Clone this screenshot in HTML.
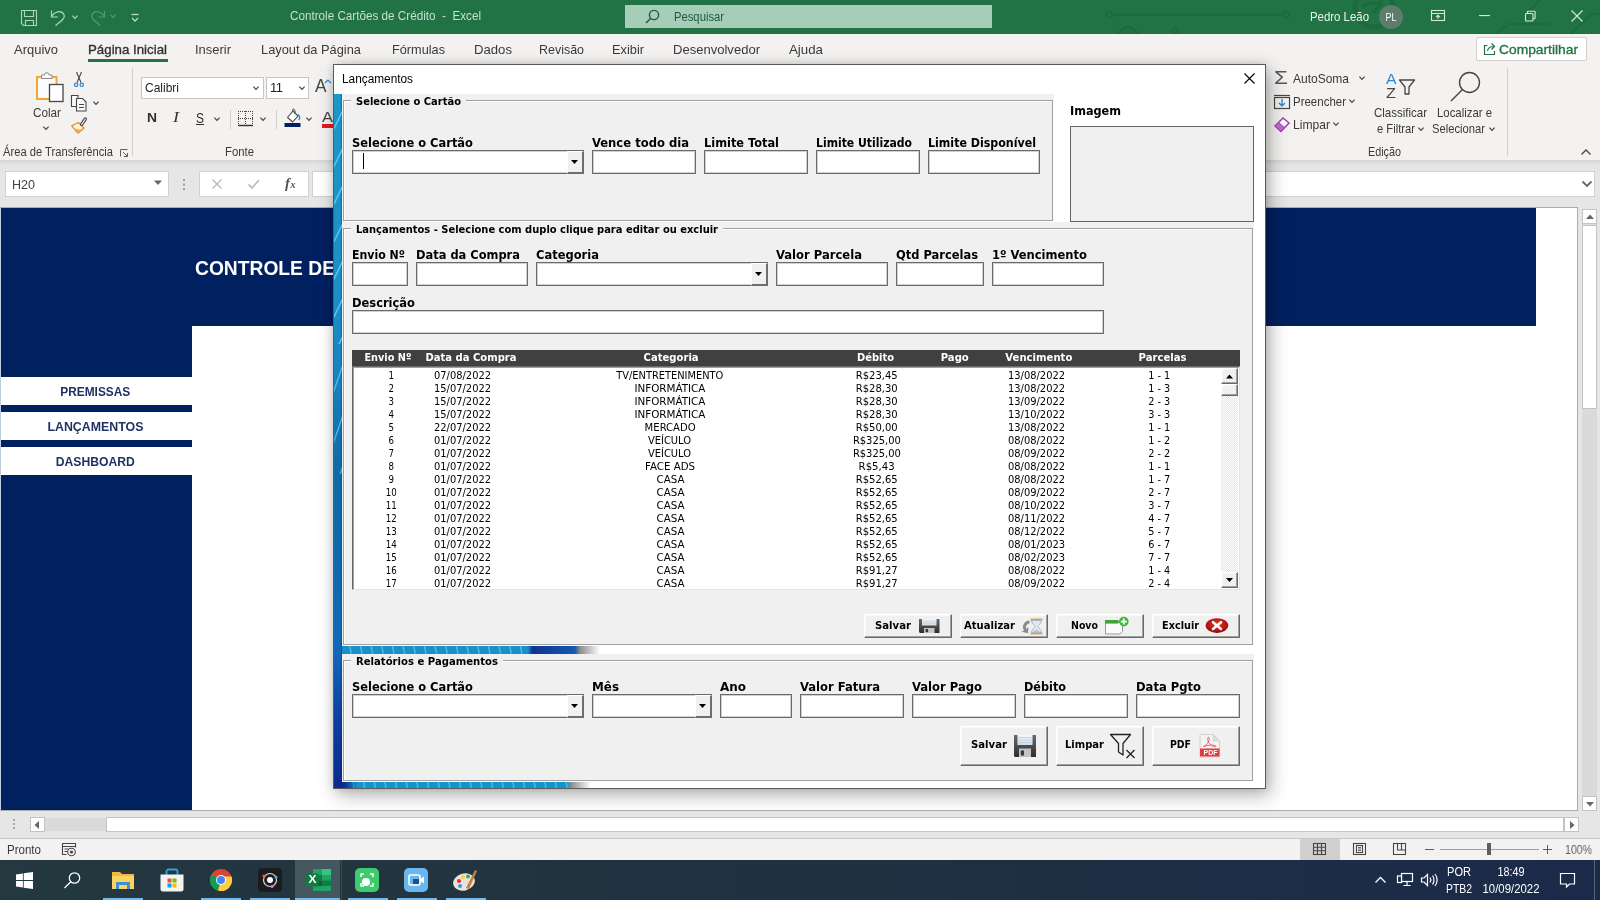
<!DOCTYPE html>
<html lang="pt-BR"><head><meta charset="utf-8"><title>Controle Cartões de Crédito - Excel</title>
<style>
html,body{margin:0;padding:0;}
body{width:1600px;height:900px;overflow:hidden;position:relative;background:#fff;font-family:"Liberation Sans",sans-serif;}
#root{position:absolute;left:0;top:0;width:1600px;height:900px;overflow:hidden;will-change:transform;}
#root div,#root svg,#root span.t{position:absolute;box-sizing:border-box;}
span.t,span.ti{white-space:nowrap;display:inline-block;vertical-align:top;}
#root div.tc{text-align:center;font-size:0;}
#root div.tr{text-align:right;font-size:0;}
#root .tb{background:#fff;border:1px solid #6a6a6a;box-shadow:inset 0 0 0 1px rgba(90,90,90,.28);}
#root .btn{background:#f0f0f0;border:1px solid;border-color:#fff #696969 #696969 #fff;box-shadow:inset -1px -1px 0 #a0a0a0, inset 1px 1px 0 #f7f7f7;}
#root .cb{background:#f0f0f0;border-style:solid;border-width:1px 2px 2px 1px;border-color:#fff #6e6e6e #6e6e6e #fff;}
</style></head><body><div id="root">
<div style="left:0px;top:0px;width:1600px;height:34px;background:#217346;"></div>
<svg style="left:1100px;top:0px;" width="500" height="34" viewBox="0 0 500 34"><g fill="none" stroke="#1c6a3e" stroke-width="1.800"><path d="M12 14.500H183"></path><circle cx="9" cy="14.500" r="3"></circle><circle cx="186" cy="14.500" r="3"></circle><circle cx="28" cy="36" r="9" stroke-width="3"></circle><circle cx="75" cy="31" r="2.500"></circle><circle cx="274" cy="8" r="19" stroke-width="5"></circle><path d="M262 6l8-3l12 0M282 3l-9 10" stroke-width="3"></path><path d="M395 34l14-10h40M470 34l22-20h40l14-14M440 0l-12 12"></path></g></svg>
<svg style="left:20px;top:9px;" width="18" height="18" viewBox="0 0 18 18"><g fill="none" stroke="#a9d8ba" stroke-width="1.1"><path d="M1.5 1.5h15v15h-13l-2-2z"></path><path d="M4.5 1.5v6h9v-6M5.5 16.5v-5h8v5"></path></g></svg>
<svg style="left:49px;top:8px;" width="18" height="18" viewBox="0 0 18 18"><g fill="none" stroke="#a9d8ba" stroke-width="1.2"><path d="M2.5 2.5v6.5h6.5"></path><path d="M2.5 9c3-6 10-7 12.5-2.5c1.5 3.5-2 6-8.5 11"></path></g></svg>
<svg style="left:70px;top:12.5px;" width="10" height="8" viewBox="0 0 10 8"><path d="M2.4 2.7L5 5.3L7.6 2.7" fill="none" stroke="#a9d8ba" stroke-width="1.2"></path></svg>
<svg style="left:89px;top:8px;" width="18" height="18" viewBox="0 0 18 18"><g fill="none" stroke="#4f9a72" stroke-width="1.200"><path d="M15.5 3v6h-6"></path><path d="M15.5 9c-3-6-10-7-12.500-2.500c-1.500 3.500 2 6 8.500 11"></path></g></svg>
<svg style="left:108px;top:12px;" width="10" height="8" viewBox="0 0 10 8"><path d="M2.4 2.7L5 5.3L7.6 2.7" fill="none" stroke="#4f9470" stroke-width="1.3"></path></svg>
<svg style="left:130px;top:12px;" width="10" height="12" viewBox="0 0 10 12"><g fill="none" stroke="#b9dcc6" stroke-width="1.3"><path d="M1.5 2.500h7"></path><path d="M2 6l3 3l3-3"></path></g></svg>
<span class="t" style="left: 290px; top: 6px; font: 400 13px / 20px &quot;Liberation Sans&quot;, sans-serif; color: rgb(200, 223, 210); white-space: nowrap; transform: scaleX(0.8991); transform-origin: 0px 50%;">Controle Cartões de Crédito&nbsp; -&nbsp; Excel</span>
<div style="left:625px;top:5px;width:367px;height:23px;background:#a6cdb8;"></div>
<svg style="left:645px;top:9px;" width="15" height="15" viewBox="0 0 15 15"><g fill="none" stroke="#1e5c3a" stroke-width="1.4"><circle cx="9" cy="6" r="4.600"></circle><path d="M5.700 9.300L1 14"></path></g></svg>
<span class="t" style="left: 674px; top: 6px; font: 400 13px / 21px &quot;Liberation Sans&quot;, sans-serif; color: rgb(30, 92, 58); white-space: nowrap; transform: scaleX(0.8649); transform-origin: 0px 50%;">Pesquisar</span>
<span class="t" style="left: 1310px; top: 7px; font: 400 13px / 20px &quot;Liberation Sans&quot;, sans-serif; color: rgb(232, 242, 236); white-space: nowrap; transform: scaleX(0.8775); transform-origin: 0px 50%;">Pedro Leão</span>
<div style="left:1379px;top:5px;width:24px;height:24px;border-radius:12px;background:#5d7c6c;"></div>
<div class="tc" style="left:1091px;top:6px;width:600px;height:24px;"><span class="ti" style="font: 400 10px / 24px &quot;Liberation Sans&quot;, sans-serif; color: rgb(255, 255, 255); white-space: nowrap; transform: scaleX(0.8991); transform-origin: 50% 50%;">PL</span></div>
<svg style="left:1430px;top:9px;" width="16" height="14" viewBox="0 0 16 14"><g fill="none" stroke="#d6e8dd" stroke-width="1.1"><rect x="1.5" y="1.500" width="13" height="10"></rect><path d="M1.500 4.500h13M8 10V6.500M6 8.200l2-2l2 2"></path></g></svg>
<svg style="left:1479px;top:15px;" width="12" height="2" viewBox="0 0 12 2"><rect width="11" height="1.100" fill="#d6e8dd"></rect></svg>
<svg style="left:1524px;top:10px;" width="12" height="12" viewBox="0 0 12 12"><g fill="none" stroke="#d6e8dd" stroke-width="1.1"><rect x="1.500" y="3.500" width="7.500" height="7.500" rx="1"></rect><path d="M3.500 3.500v-1.500a.8 .8 0 0 1 .8-.8h6a.8 .8 0 0 1 .8 .8v6a.8 .8 0 0 1-.8 .8h-1.500"></path></g></svg>
<svg style="left:1570px;top:9px;" width="14" height="14" viewBox="0 0 14 14"><path d="M1.500 1.500l11 11M12.500 1.500l-11 11" stroke="#d6e8dd" stroke-width="1.200" fill="none"></path></svg>
<div style="left:0px;top:34px;width:1600px;height:126px;background:#f3f2f1;"></div>
<span class="t" style="left: 14px; top: 39px; font: 400 13.5px / 22px &quot;Liberation Sans&quot;, sans-serif; color: rgb(59, 58, 57); white-space: nowrap; transform: scaleX(0.9611); transform-origin: 0px 50%;">Arquivo</span>
<span class="t" style="left: 88px; top: 39px; font: 400 13.5px / 22px &quot;Liberation Sans&quot;, sans-serif; color: rgb(50, 49, 48); -webkit-text-stroke: 0.35px rgb(50, 49, 48); white-space: nowrap; transform: scaleX(0.9837); transform-origin: 0px 50%;">Página Inicial</span>
<span class="t" style="left: 195px; top: 39px; font: 400 13.5px / 22px &quot;Liberation Sans&quot;, sans-serif; color: rgb(59, 58, 57); white-space: nowrap; transform: scaleX(0.9596); transform-origin: 0px 50%;">Inserir</span>
<span class="t" style="left: 261px; top: 39px; font: 400 13.5px / 22px &quot;Liberation Sans&quot;, sans-serif; color: rgb(59, 58, 57); white-space: nowrap; transform: scaleX(0.9515); transform-origin: 0px 50%;">Layout da Página</span>
<span class="t" style="left: 392px; top: 39px; font: 400 13.5px / 22px &quot;Liberation Sans&quot;, sans-serif; color: rgb(59, 58, 57); white-space: nowrap; transform: scaleX(0.942); transform-origin: 0px 50%;">Fórmulas</span>
<span class="t" style="left: 474px; top: 39px; font: 400 13.5px / 22px &quot;Liberation Sans&quot;, sans-serif; color: rgb(59, 58, 57); white-space: nowrap; transform: scaleX(0.9736); transform-origin: 0px 50%;">Dados</span>
<span class="t" style="left: 539px; top: 39px; font: 400 13.5px / 22px &quot;Liberation Sans&quot;, sans-serif; color: rgb(59, 58, 57); white-space: nowrap; transform: scaleX(0.9225); transform-origin: 0px 50%;">Revisão</span>
<span class="t" style="left: 612px; top: 39px; font: 400 13.5px / 22px &quot;Liberation Sans&quot;, sans-serif; color: rgb(59, 58, 57); white-space: nowrap; transform: scaleX(0.9477); transform-origin: 0px 50%;">Exibir</span>
<span class="t" style="left: 673px; top: 39px; font: 400 13.5px / 22px &quot;Liberation Sans&quot;, sans-serif; color: rgb(59, 58, 57); white-space: nowrap; transform: scaleX(0.966); transform-origin: 0px 50%;">Desenvolvedor</span>
<span class="t" style="left: 789px; top: 39px; font: 400 13.5px / 22px &quot;Liberation Sans&quot;, sans-serif; color: rgb(59, 58, 57); white-space: nowrap; transform: scaleX(0.9846); transform-origin: 0px 50%;">Ajuda</span>
<div style="left:88px;top:59px;width:80px;height:3px;background:#217346;"></div>
<div style="left:1476px;top:37px;width:111px;height:24px;background:#fff;border:1px solid #d2d0ce;border-radius:2px;"></div>
<svg style="left:1482px;top:41px;" width="15" height="15" viewBox="0 0 15 15"><g fill="none" stroke="#217346" stroke-width="1.200"><path d="M5.500 4.500h-3v9h10v-3.500"></path><path d="M5.500 10c.5-3 2.500-4.500 6-4.500M9.500 2.500l3 3l-3 3"></path></g></svg>
<span class="t" style="left: 1499px; top: 39px; font: 400 13.5px / 22px &quot;Liberation Sans&quot;, sans-serif; color: rgb(33, 115, 70); -webkit-text-stroke: 0.35px rgb(33, 115, 70); white-space: nowrap; transform: scaleX(1.0222); transform-origin: 0px 50%;">Compartilhar</span>
<svg style="left:34px;top:70px;" width="32" height="34" viewBox="0 0 32 34"><g fill="none"><path d="M3 7h19.500v22h-19.500z" fill="#fbfbfb" stroke="#f0a830" stroke-width="2"></path><path d="M7.500 8.500v-3.500h3a2.300 2.300 0 0 1 4.600 0h3v3.500z" fill="#f8f8f8" stroke="#8a8886" stroke-width="1"></path><rect x="15.500" y="14.500" width="13.500" height="17" fill="#fff" stroke="#484644" stroke-width="1.300"></rect></g></svg>
<span class="t" style="left: 33px; top: 103px; font: 400 13.5px / 20px &quot;Liberation Sans&quot;, sans-serif; color: rgb(59, 58, 57); white-space: nowrap; transform: scaleX(0.8678); transform-origin: 0px 50%;">Colar</span>
<svg style="left:41px;top:124px;" width="10" height="8" viewBox="0 0 10 8"><path d="M2.4 2.7L5 5.3L7.6 2.7" fill="none" stroke="#444" stroke-width="1.2"></path></svg>
<svg style="left:72px;top:71px;" width="14" height="17" viewBox="0 0 14 17"><g fill="none"><path d="M4.500 1l4.500 10.500M9.500 1l-4.500 10.500" stroke="#484644" stroke-width="1.100"></path><circle cx="4.200" cy="13.800" r="1.700" stroke="#2b88d8" stroke-width="1.200"></circle><circle cx="9.800" cy="13.800" r="1.700" stroke="#2b88d8" stroke-width="1.200"></circle></g></svg>
<svg style="left:70px;top:94px;" width="18" height="18" viewBox="0 0 18 18"><g fill="#f8f8f8" stroke="#484644" stroke-width="1.100"><path d="M1.500 1.500h6.500v11h-6.500z"></path><path d="M6.500 4.500h6l3.500 3.500v9h-9.500z"></path><path d="M9 10.500h5M9 13.500h5"></path></g></svg>
<svg style="left:91px;top:99px;" width="10" height="8" viewBox="0 0 10 8"><path d="M2.4 2.7L5 5.3L7.6 2.7" fill="none" stroke="#444" stroke-width="1.2"></path></svg>
<svg style="left:70px;top:115px;" width="18" height="20" viewBox="0 0 18 20"><g stroke-linejoin="round"><path d="M1.700 10.900L8.300 7.500L13.900 13.100L7.800 18.100z" fill="#fdf3e4" stroke="#e8912d" stroke-width="1.400"></path><path d="M4.500 13.500L7.800 18.100L11.500 15z" fill="#f2a95a"></path><path d="M11.700 9.300L15.300 4" stroke="#484644" stroke-width="3.400" stroke-linecap="round"></path><path d="M11.700 9.300L15.300 4" stroke="#f3f2f1" stroke-width="1.200" stroke-linecap="round"></path></g></svg>
<span class="t" style="left: 3px; top: 143px; font: 400 12px / 18px &quot;Liberation Sans&quot;, sans-serif; color: rgb(59, 58, 57); white-space: nowrap; transform: scaleX(0.9316); transform-origin: 0px 50%;">Área de Transferência</span>
<svg style="left:119px;top:148px;" width="10" height="10" viewBox="0 0 10 10"><g fill="none" stroke="#605e5c" stroke-width="1"><path d="M1.500 8.500v-7h7"></path><path d="M4 4l4.500 4.500M8.500 5v3.500h-3.500"></path></g></svg>
<div style="left:132px;top:68px;width:1px;height:88px;background:#d2d0ce;"></div>
<div style="left:141px;top:76.5px;width:123px;height:22px;background:#fff;border:1px solid #c8c6c4;"></div>
<span class="t" style="left: 145px; top: 77px; font: 400 13px / 22px &quot;Liberation Sans&quot;, sans-serif; color: rgb(32, 31, 30); white-space: nowrap; transform: scaleX(0.9228); transform-origin: 0px 50%;">Calibri</span>
<svg style="left:251px;top:84px;" width="10" height="8" viewBox="0 0 10 8"><path d="M2.4 2.7L5 5.3L7.6 2.7" fill="none" stroke="#444" stroke-width="1.2"></path></svg>
<div style="left:266px;top:76.5px;width:43px;height:22px;background:#fff;border:1px solid #c8c6c4;"></div>
<span class="t" style="left:270px;top:77px;font:400 13px/22px 'Liberation Sans', sans-serif;color:#201f1e;letter-spacing:-.5px;">11</span>
<svg style="left:297px;top:84px;" width="10" height="8" viewBox="0 0 10 8"><path d="M2.4 2.7L5 5.3L7.6 2.7" fill="none" stroke="#444" stroke-width="1.2"></path></svg>
<span class="t" style="left: 314.5px; top: 75px; font: 400 18px / 22px &quot;Liberation Sans&quot;, sans-serif; color: rgb(72, 70, 68); white-space: nowrap; transform: scaleX(0.9571); transform-origin: 0px 50%;">A</span>
<svg style="left:323.5px;top:78px;" width="8" height="6" viewBox="0 0 8 6"><path d="M1 5l3-3l3 3" fill="none" stroke="#2b88d8" stroke-width="1.200"></path></svg>
<span class="t" style="left: 146.5px; top: 108px; font: 700 13px / 20px &quot;Liberation Sans&quot;, sans-serif; color: rgb(50, 49, 48); white-space: nowrap; transform: scaleX(1.0649); transform-origin: 0px 50%;">N</span>
<span class="t" style="left: 173px; top: 108px; font: italic 400 14px / 20px &quot;Liberation Serif&quot;, serif; color: rgb(50, 49, 48); white-space: nowrap; transform: scaleX(1.2843); transform-origin: 0px 50%;">I</span>
<span class="t" style="left: 196px; top: 108px; font: 400 14px / 20px &quot;Liberation Sans&quot;, sans-serif; color: rgb(50, 49, 48); text-decoration: underline; white-space: nowrap; transform: scaleX(0.8562); transform-origin: 0px 50%;">S</span>
<svg style="left:212px;top:115px;" width="10" height="8" viewBox="0 0 10 8"><path d="M2.4 2.7L5 5.3L7.6 2.7" fill="none" stroke="#444" stroke-width="1.2"></path></svg>
<div style="left:230px;top:110px;width:1px;height:19px;background:#d2d0ce;"></div>
<svg style="left:237px;top:110px;" width="17" height="17" viewBox="0 0 17 17"><g fill="none" stroke="#484644" stroke-width="1" stroke-dasharray="1 1"><path d="M1 1.500h15M1.500 1v15M15.500 1v15M8.500 1v15M1 8.500h15"></path></g><path d="M1 15.500h15" stroke="#323130" stroke-width="1.400"></path></svg>
<svg style="left:258px;top:115px;" width="10" height="8" viewBox="0 0 10 8"><path d="M2.4 2.7L5 5.3L7.6 2.7" fill="none" stroke="#444" stroke-width="1.2"></path></svg>
<div style="left:276px;top:110px;width:1px;height:19px;background:#d2d0ce;"></div>
<svg style="left:284px;top:108px;" width="17" height="20" viewBox="0 0 17 20"><g><path d="M3.500 9.500l5.500-6.500l5 5l-5.500 6z" fill="#fff" stroke="#484644" stroke-width="1.100"></path><path d="M9 3c-1.500-2.500 1.500-3 2 0v3" fill="none" stroke="#484644" stroke-width="1"></path><path d="M14.200 6.500c1.500 1.500 1.800 3.500 .8 5.500" fill="none" stroke="#2b88d8" stroke-width="1.400"></path><rect x="0.500" y="15" width="16" height="4" fill="#002060"></rect></g></svg>
<svg style="left:304px;top:115px;" width="10" height="8" viewBox="0 0 10 8"><path d="M2.4 2.7L5 5.3L7.6 2.7" fill="none" stroke="#444" stroke-width="1.2"></path></svg>
<span class="t" style="left: 322px; top: 107px; font: 400 15px / 20px &quot;Liberation Sans&quot;, sans-serif; color: rgb(72, 70, 68); white-space: nowrap; transform: scaleX(1.0983); transform-origin: 0px 50%;">A</span>
<div style="left:322px;top:124px;width:11px;height:4px;background:#e8191c;"></div>
<span class="t" style="left: 225px; top: 143px; font: 400 12px / 18px &quot;Liberation Sans&quot;, sans-serif; color: rgb(59, 58, 57); white-space: nowrap; transform: scaleX(0.945); transform-origin: 0px 50%;">Fonte</span>
<span class="t" style="left: 1274px; top: 67px; font: 400 18px / 22px &quot;Liberation Sans&quot;, sans-serif; color: rgb(90, 88, 86); white-space: nowrap; transform: scaleX(1.2567); transform-origin: 0px 50%;">Σ</span>
<span class="t" style="left: 1293px; top: 69px; font: 400 13.5px / 20px &quot;Liberation Sans&quot;, sans-serif; color: rgb(59, 58, 57); white-space: nowrap; transform: scaleX(0.8882); transform-origin: 0px 50%;">AutoSoma</span>
<svg style="left:1357px;top:74px;" width="10" height="8" viewBox="0 0 10 8"><path d="M2.4 2.7L5 5.3L7.6 2.7" fill="none" stroke="#444" stroke-width="1.2"></path></svg>
<svg style="left:1273px;top:94px;" width="18" height="16" viewBox="0 0 18 16"><g fill="none"><path d="M1 1.500h16" stroke="#484644" stroke-width="1.200"></path><rect x="1.500" y="3.500" width="15" height="11" stroke="#484644" stroke-width="1.200"></rect><path d="M9 5v6.500M6 9l3 3l3-3" stroke="#2b88d8" stroke-width="1.400"></path></g></svg>
<span class="t" style="left: 1293px; top: 92px; font: 400 13.5px / 20px &quot;Liberation Sans&quot;, sans-serif; color: rgb(59, 58, 57); white-space: nowrap; transform: scaleX(0.8508); transform-origin: 0px 50%;">Preencher</span>
<svg style="left:1347px;top:97px;" width="10" height="8" viewBox="0 0 10 8"><path d="M2.4 2.7L5 5.3L7.6 2.7" fill="none" stroke="#444" stroke-width="1.2"></path></svg>
<svg style="left:1273px;top:116px;" width="18" height="17" viewBox="0 0 18 17"><g><path d="M2 10l8-8l6 5l-8 8.500z" fill="#fff" stroke="#a63db8" stroke-width="1.500"></path><path d="M2 10l3.500-3.500l6 5l-3.500 4z" fill="#c36bd1" stroke="#a63db8" stroke-width="1"></path></g></svg>
<span class="t" style="left: 1293px; top: 115px; font: 400 13.5px / 20px &quot;Liberation Sans&quot;, sans-serif; color: rgb(59, 58, 57); white-space: nowrap; transform: scaleX(0.8966); transform-origin: 0px 50%;">Limpar</span>
<svg style="left:1331px;top:120px;" width="10" height="8" viewBox="0 0 10 8"><path d="M2.4 2.7L5 5.3L7.6 2.7" fill="none" stroke="#444" stroke-width="1.2"></path></svg>
<svg style="left:1396px;top:76px;" width="22" height="22" viewBox="0 0 22 22"><path d="M3.500 4h15l-5.500 7v7h-4v-7z" fill="none" stroke="#484644" stroke-width="1.300" stroke-linejoin="round"></path></svg>
<span class="t" style="left: 1386px; top: 71px; font: 400 15px / 16px &quot;Liberation Sans&quot;, sans-serif; color: rgb(43, 136, 216); white-space: nowrap; transform: scaleX(1.0484); transform-origin: 0px 50%;">A</span>
<span class="t" style="left: 1386px; top: 85px; font: 400 15px / 16px &quot;Liberation Sans&quot;, sans-serif; color: rgb(72, 70, 68); white-space: nowrap; transform: scaleX(1.0903); transform-origin: 0px 50%;">Z</span>
<span class="t" style="left: 1374px; top: 103px; font: 400 13.5px / 20px &quot;Liberation Sans&quot;, sans-serif; color: rgb(59, 58, 57); white-space: nowrap; transform: scaleX(0.8512); transform-origin: 0px 50%;">Classificar</span>
<span class="t" style="left: 1376.5px; top: 119px; font: 400 13.5px / 20px &quot;Liberation Sans&quot;, sans-serif; color: rgb(59, 58, 57); white-space: nowrap; transform: scaleX(0.8303); transform-origin: 0px 50%;">e Filtrar</span>
<svg style="left:1416px;top:125px;" width="10" height="8" viewBox="0 0 10 8"><path d="M2.4 2.7L5 5.3L7.6 2.7" fill="none" stroke="#444" stroke-width="1.2"></path></svg>
<svg style="left:1448px;top:70px;" width="34" height="34" viewBox="0 0 34 34"><g fill="none" stroke="#484644" stroke-width="1.400"><circle cx="21.500" cy="12.500" r="10"></circle><path d="M14.500 19.500L3 31"></path></g></svg>
<span class="t" style="left: 1437px; top: 103px; font: 400 13.5px / 20px &quot;Liberation Sans&quot;, sans-serif; color: rgb(59, 58, 57); white-space: nowrap; transform: scaleX(0.8423); transform-origin: 0px 50%;">Localizar e</span>
<span class="t" style="left: 1432px; top: 119px; font: 400 13.5px / 20px &quot;Liberation Sans&quot;, sans-serif; color: rgb(59, 58, 57); white-space: nowrap; transform: scaleX(0.8308); transform-origin: 0px 50%;">Selecionar</span>
<svg style="left:1487px;top:125px;" width="10" height="8" viewBox="0 0 10 8"><path d="M2.4 2.7L5 5.3L7.6 2.7" fill="none" stroke="#444" stroke-width="1.2"></path></svg>
<div style="left:1507px;top:68px;width:1px;height:88px;background:#d2d0ce;"></div>
<span class="t" style="left: 1368px; top: 143px; font: 400 12px / 18px &quot;Liberation Sans&quot;, sans-serif; color: rgb(59, 58, 57); white-space: nowrap; transform: scaleX(0.8991); transform-origin: 0px 50%;">Edição</span>
<svg style="left:1580px;top:148px;" width="12" height="8" viewBox="0 0 12 8"><path d="M1.500 6.500l4.500-4.500l4.500 4.500" fill="none" stroke="#444" stroke-width="1.300"></path></svg>
<div style="left:0px;top:160px;width:1600px;height:48px;background:linear-gradient(#d4d4d4,#e6e6e6 5px,#e6e6e6);"></div>
<div style="left:5px;top:171px;width:164px;height:26px;background:#fff;border:1px solid #d0d0d0;"></div>
<span class="t" style="left: 12px; top: 174px; font: 400 13px / 22px &quot;Liberation Sans&quot;, sans-serif; color: rgb(68, 68, 68); white-space: nowrap; transform: scaleX(0.964); transform-origin: 0px 50%;">H20</span>
<svg style="left:153px;top:180px;" width="10" height="6" viewBox="0 0 10 6"><path d="M1 .5h8l-4 4.500z" fill="#666"></path></svg>
<svg style="left:182px;top:178px;" width="4" height="14" viewBox="0 0 4 14"><g fill="#a0a0a0"><rect x="1" y="1" width="2" height="2"></rect><rect x="1" y="5.500" width="2" height="2"></rect><rect x="1" y="10" width="2" height="2"></rect></g></svg>
<div style="left:199px;top:171px;width:110px;height:26px;background:#fff;border:1px solid #d0d0d0;"></div>
<svg style="left:211px;top:178px;" width="12" height="12" viewBox="0 0 12 12"><path d="M1.500 1.500l9 9M10.500 1.500l-9 9" stroke="#bdbdbd" stroke-width="1.500" fill="none"></path></svg>
<svg style="left:247px;top:178px;" width="14" height="12" viewBox="0 0 14 12"><path d="M1.500 6.500l3.500 3.500l7-8" stroke="#bdbdbd" stroke-width="1.800" fill="none"></path></svg>
<span class="t" style="left:285px;top:172px;font:700 15px/22px 'Liberation Serif', serif;color:#555;font-style:italic;">f</span>
<span class="t" style="left:290.5px;top:175px;font:700 10px/20px 'Liberation Serif', serif;color:#555;font-style:italic;">x</span>
<div style="left:312px;top:171px;width:1283px;height:26px;background:#fff;border:1px solid #d0d0d0;"></div>
<svg style="left:1581px;top:180px;" width="12" height="8" viewBox="0 0 12 8"><path d="M1.500 1.500l4.500 4.500l4.500-4.500" fill="none" stroke="#666" stroke-width="1.800"></path></svg>
<div style="left:0px;top:207px;width:1600px;height:631px;background:#e6e6e6;"></div>
<div style="left:0px;top:207px;width:1578px;height:604px;background:#fff;border:1px solid #ababab;border-left-color:#c0cce0;"></div>
<div style="left:1px;top:208px;width:1535px;height:118px;background:#002060;"></div>
<div style="left:1px;top:326px;width:191px;height:484px;background:#002060;"></div>
<span class="t" style="left: 195px; top: 253px; font: 700 20.5px / 30px &quot;Liberation Sans&quot;, sans-serif; color: rgb(255, 255, 255); white-space: nowrap; transform: scaleX(0.9383); transform-origin: 0px 50%;">CONTROLE DE</span>
<div style="left:1px;top:377px;width:191px;height:28px;background:#fff;"></div>
<div class="tc" style="left:-204.5px;top:378px;width:600px;height:28px;"><span class="ti" style="font: 700 13px / 28px &quot;Liberation Sans&quot;, sans-serif; color: rgb(31, 50, 99); white-space: nowrap; transform: scaleX(0.9141); transform-origin: 50% 50%;">PREMISSAS</span></div>
<div style="left:1px;top:412px;width:191px;height:28px;background:#fff;"></div>
<div class="tc" style="left:-204.5px;top:413px;width:600px;height:28px;"><span class="ti" style="font: 700 13px / 28px &quot;Liberation Sans&quot;, sans-serif; color: rgb(31, 50, 99); white-space: nowrap; transform: scaleX(0.9517); transform-origin: 50% 50%;">LANÇAMENTOS</span></div>
<div style="left:1px;top:447px;width:191px;height:28px;background:#fff;"></div>
<div class="tc" style="left:-204.5px;top:448px;width:600px;height:28px;"><span class="ti" style="font: 700 13px / 28px &quot;Liberation Sans&quot;, sans-serif; color: rgb(31, 50, 99); white-space: nowrap; transform: scaleX(0.9349); transform-origin: 50% 50%;">DASHBOARD</span></div>
<div style="left:1582px;top:224px;width:15px;height:572px;background:#dadada;"></div>
<div style="left:1582px;top:209px;width:15px;height:15px;background:#fff;border:1px solid #c3c3c3;"></div>
<svg style="left:1585px;top:213px;" width="10" height="7" viewBox="0 0 10 7"><path d="M1 6l4-4.500l4 4.500z" fill="#666"></path></svg>
<div style="left:1582px;top:225px;width:15px;height:184px;background:#fff;border:1px solid #c3c3c3;"></div>
<div style="left:1582px;top:796px;width:15px;height:15px;background:#fff;border:1px solid #c3c3c3;"></div>
<svg style="left:1585px;top:801px;" width="10" height="7" viewBox="0 0 10 7"><path d="M1 1l4 4.500l4-4.500z" fill="#666"></path></svg>
<svg style="left:12px;top:818px;" width="4" height="12" viewBox="0 0 4 12"><g fill="#a6a6a6"><rect x="1" y="1" width="2" height="2"></rect><rect x="1" y="5" width="2" height="2"></rect><rect x="1" y="9" width="2" height="2"></rect></g></svg>
<div style="left:30px;top:817px;width:15px;height:15px;background:#fff;border:1px solid #c3c3c3;"></div>
<svg style="left:33px;top:820px;" width="8" height="10" viewBox="0 0 8 10"><path d="M6 1l-4.500 4l4.500 4z" fill="#666"></path></svg>
<div style="left:45px;top:818px;width:62px;height:13px;background:#dadada;"></div>
<div style="left:106px;top:817px;width:1458px;height:15px;background:#fff;border:1px solid #c3c3c3;"></div>
<div style="left:1564px;top:817px;width:15px;height:15px;background:#fff;border:1px solid #c3c3c3;"></div>
<svg style="left:1568px;top:820px;" width="8" height="10" viewBox="0 0 8 10"><path d="M2 1l4.500 4l-4.500 4z" fill="#666"></path></svg>
<div style="left:0px;top:838px;width:1600px;height:22px;background:#f3f2f1;border-top:1px solid #c6c6c6;"></div>
<span class="t" style="left: 7px; top: 840px; font: 400 12px / 21px &quot;Liberation Sans&quot;, sans-serif; color: rgb(59, 58, 57); white-space: nowrap; transform: scaleX(0.9616); transform-origin: 0px 50%;">Pronto</span>
<svg style="left:61px;top:842px;" width="17" height="15" viewBox="0 0 17 15"><g fill="none" stroke="#484644" stroke-width="1.100"><path d="M5.500 12.500h-4v-11h13v4"></path><path d="M1.500 4.500h13M3.500 7h4M3.500 9.500h2.500"></path><circle cx="10.500" cy="10" r="3.800"></circle><circle cx="10.500" cy="10" r="1.600" fill="#484644" stroke="none"></circle></g></svg>
<div style="left:1300px;top:839px;width:40px;height:21px;background:#d2d0ce;"></div>
<svg style="left:1312px;top:842px;" width="15" height="14" viewBox="0 0 15 14"><g fill="none" stroke="#484644" stroke-width="1.100"><rect x="1.500" y="1.500" width="12" height="11"></rect><path d="M5.500 1.500v11M9.500 1.500v11M1.500 5.200h12M1.500 8.800h12"></path></g></svg>
<svg style="left:1352px;top:842px;" width="15" height="14" viewBox="0 0 15 14"><g fill="none" stroke="#484644" stroke-width="1.100"><rect x="1.500" y="1.500" width="12" height="11"></rect><rect x="4.500" y="3.500" width="6" height="7"></rect><path d="M6 5.500h3M6 7h3M6 8.500h3" stroke-width=".8"></path></g></svg>
<svg style="left:1392px;top:842px;" width="15" height="14" viewBox="0 0 15 14"><g fill="none" stroke="#484644" stroke-width="1.100"><rect x="1.500" y="1.500" width="12" height="11"></rect><path d="M5.500 1.500v6.500h8M9.500 1.500v6.500"></path></g></svg>
<div style="left:1425px;top:849px;width:9px;height:1px;background:#605e5c;"></div>
<div style="left:1440px;top:849px;width:99px;height:1px;background:#a19f9d;"></div>
<div style="left:1487px;top:843px;width:4px;height:12px;background:#605e5c;"></div>
<div style="left:1543px;top:849px;width:9px;height:1px;background:#605e5c;"></div>
<div style="left:1547px;top:845px;width:1px;height:9px;background:#605e5c;"></div>
<span class="t" style="left: 1565px; top: 840px; font: 400 12px / 21px &quot;Liberation Sans&quot;, sans-serif; color: rgb(96, 94, 92); white-space: nowrap; transform: scaleX(0.8794); transform-origin: 0px 50%;">100%</span>
<div style="left:0px;top:860px;width:1600px;height:40px;background:linear-gradient(90deg,#24383f,#203240 45%,#1b2a49 100%);"></div>
<div style="left:295px;top:860px;width:45px;height:40px;background:#44565e;"></div>
<div style="left:341px;top:860px;width:1px;height:40px;background:#3a4a54;"></div>
<svg style="left:16px;top:872px;" width="17" height="17" viewBox="0 0 17 17"><g fill="#fff"><path d="M0 2.400l6.900-.95v6.650h-6.900z"></path><path d="M7.700 1.350l9.300-1.350v8.100h-9.300z"></path><path d="M0 8.900h6.900v6.650l-6.900-.95z"></path><path d="M7.700 8.900h9.300v8.100l-9.300-1.350z"></path></g></svg>
<svg style="left:63px;top:871px;" width="18" height="18" viewBox="0 0 18 18"><g fill="none" stroke="#fff" stroke-width="1.300"><circle cx="11.500" cy="7" r="5.200"></circle><path d="M7.800 10.800L1.500 17"></path></g></svg>
<svg style="left:111px;top:868px;" width="24" height="24" viewBox="0 0 24 24"><g><path d="M1 4h8l2 2h12v15h-22z" fill="#f5b83d"></path><path d="M1 8h22v13h-22z" fill="#fbd35f"></path><path d="M5 14h14v7h-14z" fill="#3d8fd6"></path><path d="M8 17h8v4h-8z" fill="#fbd35f"></path></g></svg>
<svg style="left:160px;top:868px;" width="24" height="24" viewBox="0 0 24 24"><g><path d="M6.500 7v-3.500a2 2 0 0 1 2-2h7a2 2 0 0 1 2 2v3.500" fill="none" stroke="#2ea3e6" stroke-width="1.800"></path><path d="M.5 6.500h23v14.500a2.500 2.500 0 0 1-2.500 2.500h-18a2.500 2.500 0 0 1-2.500-2.500z" fill="#f3f3f3"></path><rect x="7.500" y="10.500" width="4" height="4" fill="#f25022"></rect><rect x="12.500" y="10.500" width="4" height="4" fill="#7fba00"></rect><rect x="7.500" y="15.500" width="4" height="4" fill="#00a4ef"></rect><rect x="12.500" y="15.500" width="4" height="4" fill="#ffb900"></rect></g></svg>
<svg style="left:209px;top:868px;" width="24" height="24" viewBox="0 0 24 24"><g><circle cx="12" cy="12" r="11" fill="#db4437"></circle><path d="M12 12L2.500 6.500A11 11 0 0 0 9 22.600z" fill="#0f9d58"></path><path d="M12 12L9 22.600A11 11 0 0 0 22.500 8.500h-10.500z" fill="#ffcd40"></path><circle cx="12" cy="12" r="5" fill="#fff"></circle><circle cx="12" cy="12" r="4" fill="#4285f4"></circle></g></svg>
<svg style="left:258px;top:868px;" width="24" height="24" viewBox="0 0 24 24"><g><rect x="0" y="0" width="24" height="24" rx="4" fill="#1c1c1e"></rect><circle cx="12" cy="12" r="6.500" fill="none" stroke="#d8d8d8" stroke-width="1.200"></circle><circle cx="12" cy="12" r="3" fill="#fff"></circle><circle cx="6" cy="8" r="1.600" fill="#e55"></circle><circle cx="18" cy="9" r="1.600" fill="#5ad"></circle><circle cx="14" cy="18.500" r="1.600" fill="#c7e"></circle></g></svg>
<svg style="left:306px;top:868px;" width="26" height="24" viewBox="0 0 26 24"><g><path d="M8 1h16a1 1 0 0 1 1 1v20a1 1 0 0 1-1 1h-16a1 1 0 0 1-1-1v-20a1 1 0 0 1 1-1z" fill="#21a366"></path><path d="M16 1h8a1 1 0 0 1 1 1v5h-9z" fill="#33c481"></path><path d="M7 7h9v5.500h-9z" fill="#107c41"></path><path d="M16 12.500h9v5.500h-9z" fill="#107c41"></path><path d="M7 12.500h9v5.500h-9z" fill="#185c37"></path><rect x="0" y="5.500" width="13" height="13" rx="1.200" fill="#107c41"></rect></g></svg>
<div class="tc" style="left:12.5px;top:873px;width:600px;height:13px;"><span class="ti" style="font: 700 10.5px / 13px &quot;Liberation Sans&quot;, sans-serif; color: rgb(255, 255, 255); white-space: nowrap; transform: scaleX(1.1403); transform-origin: 50% 50%;">X</span></div>
<svg style="left:355px;top:868px;" width="24" height="24" viewBox="0 0 24 24"><g><rect width="24" height="24" rx="5" fill="#3fca6b"></rect><path d="M6 9v-3h3M15 6h3v3M18 15v3h-3M9 18h-3v-3" fill="none" stroke="#fff" stroke-width="1.600"></path><circle cx="11" cy="14" r="4" fill="#fff"></circle></g></svg>
<svg style="left:404px;top:868px;" width="24" height="24" viewBox="0 0 24 24"><g><rect width="24" height="24" rx="5" fill="#6ab7f0"></rect><rect x="5" y="7" width="11" height="10" rx="1.500" fill="none" stroke="#fff" stroke-width="1.600"></rect><path d="M17 10.500l3-2v7l-3-2z" fill="#fff"></path><rect x="9" y="11" width="6" height="5" fill="#1d4f91"></rect></g></svg>
<svg style="left:452px;top:866px;" width="28" height="28" viewBox="0 0 28 28"><g><ellipse cx="12" cy="16" rx="11" ry="8.500" fill="#e8e4da" transform="rotate(-15 12 16)"></ellipse><circle cx="7" cy="15" r="2" fill="#e23"></circle><circle cx="11" cy="11" r="2" fill="#fc3"></circle><circle cx="16" cy="10.500" r="2" fill="#3a6"></circle><circle cx="8" cy="20" r="2" fill="#39e"></circle><path d="M14 22l9-18l2 1l-8 18z" fill="#c87f3a"></path></g></svg>
<div style="left:103px;top:898px;width:40px;height:2px;background:#76b9ed;"></div>
<div style="left:201px;top:898px;width:40px;height:2px;background:#76b9ed;"></div>
<div style="left:250px;top:898px;width:40px;height:2px;background:#76b9ed;"></div>
<div style="left:295px;top:898px;width:45px;height:2px;background:#76b9ed;"></div>
<div style="left:348px;top:898px;width:40px;height:2px;background:#76b9ed;"></div>
<div style="left:397px;top:898px;width:40px;height:2px;background:#76b9ed;"></div>
<div style="left:446px;top:898px;width:40px;height:2px;background:#76b9ed;"></div>
<svg style="left:1374px;top:876px;" width="13" height="8" viewBox="0 0 13 8"><path d="M1.500 6.500l5-5l5 5" fill="none" stroke="#fff" stroke-width="1.300"></path></svg>
<svg style="left:1396px;top:872px;" width="18" height="16" viewBox="0 0 18 16"><g fill="none" stroke="#fff" stroke-width="1.200"><rect x="5.500" y="1.500" width="11" height="8"></rect><path d="M11 9.500v3.500M7.500 13.500h7"></path><rect x="1.500" y="4" width="4" height="6.500" fill="#1c2a38"></rect></g></svg>
<svg style="left:1420px;top:872px;" width="18" height="16" viewBox="0 0 18 16"><g fill="none" stroke="#fff" stroke-width="1.200"><path d="M1.500 6h2.500l3.500-3.500v11l-3.500-3.500h-2.500z"></path><path d="M10 5.500c1 1.500 1 3.500 0 5M12.500 3.500c2 2.500 2 6.500 0 9M15 2c2.800 3.500 2.800 8.500 0 12"></path></g></svg>
<div class="tc" style="left:1159px;top:863px;width:600px;height:19px;"><span class="ti" style="font: 400 12px / 19px &quot;Liberation Sans&quot;, sans-serif; color: rgb(255, 255, 255); white-space: nowrap; transform: scaleX(0.9225); transform-origin: 50% 50%;">POR</span></div>
<div class="tc" style="left:1159px;top:880px;width:600px;height:19px;"><span class="ti" style="font: 400 12px / 19px &quot;Liberation Sans&quot;, sans-serif; color: rgb(255, 255, 255); white-space: nowrap; transform: scaleX(0.8662); transform-origin: 50% 50%;">PTB2</span></div>
<div class="tc" style="left:1211px;top:863px;width:600px;height:19px;"><span class="ti" style="font: 400 12px / 19px &quot;Liberation Sans&quot;, sans-serif; color: rgb(255, 255, 255); white-space: nowrap; transform: scaleX(0.8991); transform-origin: 50% 50%;">18:49</span></div>
<div class="tc" style="left:1211px;top:880px;width:600px;height:19px;"><span class="ti" style="font: 400 12px / 19px &quot;Liberation Sans&quot;, sans-serif; color: rgb(255, 255, 255); white-space: nowrap; transform: scaleX(0.949); transform-origin: 50% 50%;">10/09/2022</span></div>
<svg style="left:1559px;top:872px;" width="17" height="17" viewBox="0 0 17 17"><path d="M1.500 1.500h14v10.500h-5l-3 3v-3h-6z" fill="none" stroke="#fff" stroke-width="1.200"></path></svg>
<div style="left:1594px;top:860px;width:1px;height:40px;background:#5a6772;"></div>
<div id="dlg" style="left:333px;top:64px;width:933px;height:725px;background:#fff;border:1px solid #5a5a5a;box-shadow:4px 6px 18px rgba(0,0,0,.30),0 0 9px rgba(0,0,0,.13);"></div>
<span class="t" style="left: 342px; top: 68px; font: 400 12px / 22px &quot;Liberation Sans&quot;, sans-serif; color: rgb(0, 0, 0); white-space: nowrap; transform: scaleX(0.9855); transform-origin: 0px 50%;">Lançamentos</span>
<svg style="left:1243px;top:72px;" width="13" height="13" viewBox="0 0 13 13"><path d="M1.500 1.500l10 10M11.500 1.500l-10 10" stroke="#000" stroke-width="1.100" fill="none"></path></svg>
<div style="left:342px;top:646px;width:262px;height:8px;background:linear-gradient(90deg,rgba(255,255,255,0) 0,rgba(255,255,255,0) 233px,#8c8c8c 238px,#fff 258px),linear-gradient(90deg,rgba(12,52,146,0) 0,rgba(12,52,146,0) 186px,#0c3492 190px,#1458b0 232px),repeating-linear-gradient(80deg,rgba(90,215,250,0) 0,rgba(90,215,250,0) 8px,rgba(90,215,250,.75) 9px,rgba(90,215,250,0) 10.500px),#1b8fc8;"></div>
<div style="left:334px;top:782px;width:262px;height:6px;background:linear-gradient(90deg,rgba(255,255,255,0) 0,rgba(255,255,255,0) 233px,#8c8c8c 237px,#fff 257px),linear-gradient(90deg,#0a2a96 0,#0a2a96 10px,rgba(10,42,150,0) 24px),repeating-linear-gradient(80deg,rgba(90,215,250,0) 0,rgba(90,215,250,0) 8px,rgba(90,215,250,.75) 9px,rgba(90,215,250,0) 10.500px),#1494cc;"></div>
<div style="left:334px;top:94px;width:8px;height:694px;background:linear-gradient(90deg,rgba(0,0,0,0) 0,rgba(0,0,0,0) 6px,rgba(0,30,80,.35) 8px),linear-gradient(180deg,#1b97c9 0,#1b90c8 200px,#1a80c0 290px,#116aa8 370px,#0f6aae 470px,#1268b8 560px,#0c3fa0 625px,#0a2a8c 690px);"></div>
<div style="left:334px;top:94px;width:8px;height:250px;background:repeating-linear-gradient(116deg,rgba(110,220,255,0) 0,rgba(110,220,255,0) 14px,rgba(110,220,255,.85) 15px,rgba(110,220,255,0) 16.500px);"></div>
<div style="left:334px;top:344px;width:8px;height:130px;background:repeating-linear-gradient(109deg,rgba(110,220,255,0) 0,rgba(110,220,255,0) 14px,rgba(110,220,255,.7) 15px,rgba(110,220,255,0) 16.500px);"></div>
<div style="left:342px;top:94px;width:712px;height:128px;background:#f0f0f0;"></div>
<div style="left:343px;top:100px;width:710px;height:121px;border:1px solid #a0a0a0;box-shadow:1px 1px 0 #fff, inset 1px 1px 0 #fff;"></div>
<div style="left:351px;top:94px;width:115px;height:14px;background:#f0f0f0;"></div>
<span class="t" style="left: 356px; top: 94px; font: 700 11px / 15px &quot;DejaVu Sans Condensed&quot;, &quot;DejaVu Sans&quot;, &quot;Liberation Sans&quot;, sans-serif; color: rgb(0, 0, 0); white-space: nowrap; transform: scaleX(1.0049); transform-origin: 0px 50%;">Selecione o Cartão</span>
<div style="left:342px;top:222px;width:912px;height:424px;background:#f0f0f0;"></div>
<div style="left:343px;top:228px;width:910px;height:417px;border:1px solid #a0a0a0;box-shadow:1px 1px 0 #fff, inset 1px 1px 0 #fff;"></div>
<div style="left:351px;top:222px;width:372px;height:14px;background:#f0f0f0;"></div>
<span class="t" style="left: 356px; top: 222px; font: 700 11px / 15px &quot;DejaVu Sans Condensed&quot;, &quot;DejaVu Sans&quot;, &quot;Liberation Sans&quot;, sans-serif; color: rgb(0, 0, 0); white-space: nowrap; transform: scaleX(1.0025); transform-origin: 0px 50%;">Lançamentos - Selecione com duplo clique para editar ou excluir</span>
<div style="left:342px;top:654px;width:912px;height:128px;background:#f0f0f0;"></div>
<div style="left:343px;top:660px;width:910px;height:121px;border:1px solid #a0a0a0;box-shadow:1px 1px 0 #fff, inset 1px 1px 0 #fff;"></div>
<div style="left:351px;top:654px;width:152px;height:14px;background:#f0f0f0;"></div>
<span class="t" style="left: 356px; top: 654px; font: 700 11px / 15px &quot;DejaVu Sans Condensed&quot;, &quot;DejaVu Sans&quot;, &quot;Liberation Sans&quot;, sans-serif; color: rgb(0, 0, 0); white-space: nowrap; transform: scaleX(1.0187); transform-origin: 0px 50%;">Relatórios e Pagamentos</span>
<span class="t" style="left: 1070px; top: 102px; font: 700 12px / 18px &quot;DejaVu Sans Condensed&quot;, &quot;DejaVu Sans&quot;, &quot;Liberation Sans&quot;, sans-serif; color: rgb(0, 0, 0); white-space: nowrap; transform: scaleX(1.0438); transform-origin: 0px 50%;">Imagem</span>
<div style="left:1070px;top:126px;width:184px;height:96px;background:#f0f0f0;border:1px solid #646464;"></div>
<span class="t" style="left: 352px; top: 134px; font: 700 12px / 18px &quot;DejaVu Sans Condensed&quot;, &quot;DejaVu Sans&quot;, &quot;Liberation Sans&quot;, sans-serif; color: rgb(0, 0, 0); white-space: nowrap; transform: scaleX(1.0615); transform-origin: 0px 50%;">Selecione o Cartão</span>
<div class="tb" style="left:352px;top:150px;width:232px;height:24px;"></div>
<div class="cb" style="left:567px;top:151px;width:17px;height:23px;"></div>
<svg style="left:571px;top:160px;" width="8" height="5" viewBox="0 0 8 5"><path d="M0 0h7l-3.500 4z" fill="#000"></path></svg>
<div style="left:363px;top:153px;width:1px;height:16px;background:#000;"></div>
<span class="t" style="left: 592px; top: 134px; font: 700 12px / 18px &quot;DejaVu Sans Condensed&quot;, &quot;DejaVu Sans&quot;, &quot;Liberation Sans&quot;, sans-serif; color: rgb(0, 0, 0); white-space: nowrap; transform: scaleX(1.0731); transform-origin: 0px 50%;">Vence todo dia</span>
<div class="tb" style="left:592px;top:150px;width:104px;height:24px;"></div>
<span class="t" style="left: 704px; top: 134px; font: 700 12px / 18px &quot;DejaVu Sans Condensed&quot;, &quot;DejaVu Sans&quot;, &quot;Liberation Sans&quot;, sans-serif; color: rgb(0, 0, 0); white-space: nowrap; transform: scaleX(1.0547); transform-origin: 0px 50%;">Limite Total</span>
<div class="tb" style="left:704px;top:150px;width:104px;height:24px;"></div>
<span class="t" style="left: 816px; top: 134px; font: 700 12px / 18px &quot;DejaVu Sans Condensed&quot;, &quot;DejaVu Sans&quot;, &quot;Liberation Sans&quot;, sans-serif; color: rgb(0, 0, 0); white-space: nowrap; transform: scaleX(1.0052); transform-origin: 0px 50%;">Limite Utilizado</span>
<div class="tb" style="left:816px;top:150px;width:104px;height:24px;"></div>
<span class="t" style="left: 928px; top: 134px; font: 700 12px / 18px &quot;DejaVu Sans Condensed&quot;, &quot;DejaVu Sans&quot;, &quot;Liberation Sans&quot;, sans-serif; color: rgb(0, 0, 0); white-space: nowrap; transform: scaleX(1.0242); transform-origin: 0px 50%;">Limite Disponível</span>
<div class="tb" style="left:928px;top:150px;width:112px;height:24px;"></div>
<span class="t" style="left: 352px; top: 246px; font: 700 12px / 18px &quot;DejaVu Sans Condensed&quot;, &quot;DejaVu Sans&quot;, &quot;Liberation Sans&quot;, sans-serif; color: rgb(0, 0, 0); white-space: nowrap; transform: scaleX(1.0171); transform-origin: 0px 50%;">Envio Nº</span>
<div class="tb" style="left:352px;top:262px;width:56px;height:24px;"></div>
<span class="t" style="left: 416px; top: 246px; font: 700 12px / 18px &quot;DejaVu Sans Condensed&quot;, &quot;DejaVu Sans&quot;, &quot;Liberation Sans&quot;, sans-serif; color: rgb(0, 0, 0); white-space: nowrap; transform: scaleX(1.0595); transform-origin: 0px 50%;">Data da Compra</span>
<div class="tb" style="left:416px;top:262px;width:112px;height:24px;"></div>
<span class="t" style="left: 536px; top: 246px; font: 700 12px / 18px &quot;DejaVu Sans Condensed&quot;, &quot;DejaVu Sans&quot;, &quot;Liberation Sans&quot;, sans-serif; color: rgb(0, 0, 0); white-space: nowrap; transform: scaleX(1.065); transform-origin: 0px 50%;">Categoria</span>
<div class="tb" style="left:536px;top:262px;width:232px;height:24px;"></div>
<div class="cb" style="left:751px;top:263px;width:17px;height:23px;"></div>
<svg style="left:755px;top:272px;" width="8" height="5" viewBox="0 0 8 5"><path d="M0 0h7l-3.500 4z" fill="#000"></path></svg>
<span class="t" style="left: 776px; top: 246px; font: 700 12px / 18px &quot;DejaVu Sans Condensed&quot;, &quot;DejaVu Sans&quot;, &quot;Liberation Sans&quot;, sans-serif; color: rgb(0, 0, 0); white-space: nowrap; transform: scaleX(1.0737); transform-origin: 0px 50%;">Valor Parcela</span>
<div class="tb" style="left:776px;top:262px;width:112px;height:24px;"></div>
<span class="t" style="left: 896px; top: 246px; font: 700 12px / 18px &quot;DejaVu Sans Condensed&quot;, &quot;DejaVu Sans&quot;, &quot;Liberation Sans&quot;, sans-serif; color: rgb(0, 0, 0); white-space: nowrap; transform: scaleX(1.0628); transform-origin: 0px 50%;">Qtd Parcelas</span>
<div class="tb" style="left:896px;top:262px;width:88px;height:24px;"></div>
<span class="t" style="left: 992px; top: 246px; font: 700 12px / 18px &quot;DejaVu Sans Condensed&quot;, &quot;DejaVu Sans&quot;, &quot;Liberation Sans&quot;, sans-serif; color: rgb(0, 0, 0); white-space: nowrap; transform: scaleX(1.0672); transform-origin: 0px 50%;">1º Vencimento</span>
<div class="tb" style="left:992px;top:262px;width:112px;height:24px;"></div>
<span class="t" style="left: 352px; top: 294px; font: 700 12px / 18px &quot;DejaVu Sans Condensed&quot;, &quot;DejaVu Sans&quot;, &quot;Liberation Sans&quot;, sans-serif; color: rgb(0, 0, 0); white-space: nowrap; transform: scaleX(1.0633); transform-origin: 0px 50%;">Descrição</span>
<div class="tb" style="left:352px;top:310px;width:752px;height:24px;"></div>
<div style="left:352px;top:350px;width:888px;height:16px;background:#404040;"></div>
<div class="tc" style="left:88px;top:350px;width:600px;height:16px;"><span class="ti" style="font: 700 11px / 16px &quot;DejaVu Sans Condensed&quot;, &quot;DejaVu Sans&quot;, &quot;Liberation Sans&quot;, sans-serif; color: rgb(255, 255, 255); white-space: nowrap; transform: scaleX(0.984); transform-origin: 50% 50%;">Envio Nº</span></div>
<div class="tc" style="left:171px;top:350px;width:600px;height:16px;"><span class="ti" style="font: 700 11px / 16px &quot;DejaVu Sans Condensed&quot;, &quot;DejaVu Sans&quot;, &quot;Liberation Sans&quot;, sans-serif; color: rgb(255, 255, 255); white-space: nowrap; transform: scaleX(1.0115); transform-origin: 50% 50%;">Data da Compra</span></div>
<div class="tc" style="left:371px;top:350px;width:600px;height:16px;"><span class="ti" style="font: 700 11px / 16px &quot;DejaVu Sans Condensed&quot;, &quot;DejaVu Sans&quot;, &quot;Liberation Sans&quot;, sans-serif; color: rgb(255, 255, 255); white-space: nowrap; transform: scaleX(1.0144); transform-origin: 50% 50%;">Categoria</span></div>
<div class="tc" style="left:575px;top:350px;width:600px;height:16px;"><span class="ti" style="font: 700 11px / 16px &quot;DejaVu Sans Condensed&quot;, &quot;DejaVu Sans&quot;, &quot;Liberation Sans&quot;, sans-serif; color: rgb(255, 255, 255); white-space: nowrap; transform: scaleX(1.0017); transform-origin: 50% 50%;">Débito</span></div>
<div class="tc" style="left:655px;top:350px;width:600px;height:16px;"><span class="ti" style="font: 700 11px / 16px &quot;DejaVu Sans Condensed&quot;, &quot;DejaVu Sans&quot;, &quot;Liberation Sans&quot;, sans-serif; color: rgb(255, 255, 255); white-space: nowrap; transform: scaleX(1.017); transform-origin: 50% 50%;">Pago</span></div>
<div class="tc" style="left:739px;top:350px;width:600px;height:16px;"><span class="ti" style="font: 700 11px / 16px &quot;DejaVu Sans Condensed&quot;, &quot;DejaVu Sans&quot;, &quot;Liberation Sans&quot;, sans-serif; color: rgb(255, 255, 255); white-space: nowrap; transform: scaleX(1.02); transform-origin: 50% 50%;">Vencimento</span></div>
<div class="tc" style="left:863px;top:350px;width:600px;height:16px;"><span class="ti" style="font: 700 11px / 16px &quot;DejaVu Sans Condensed&quot;, &quot;DejaVu Sans&quot;, &quot;Liberation Sans&quot;, sans-serif; color: rgb(255, 255, 255); white-space: nowrap; transform: scaleX(1.0199); transform-origin: 50% 50%;">Parcelas</span></div>
<div style="left:352px;top:366px;width:888px;height:224px;background:#fff;border:1px solid;border-color:#696969 #e3e3e3 #e3e3e3 #696969;box-shadow:inset 1px 1px 0 #a0a0a0;"></div>
<div class="tc" style="left:91px;top:369px;width:600px;height:13px;"><span class="ti" style="font: 400 11px / 13px &quot;DejaVu Sans Condensed&quot;, &quot;DejaVu Sans&quot;, &quot;Liberation Sans&quot;, sans-serif; color: rgb(0, 0, 0); white-space: nowrap; transform: scaleX(0.8734); transform-origin: 50% 50%;">1</span></div>
<div class="tc" style="left:163px;top:369px;width:600px;height:13px;"><span class="ti" style="font: 400 11px / 13px &quot;DejaVu Sans Condensed&quot;, &quot;DejaVu Sans&quot;, &quot;Liberation Sans&quot;, sans-serif; color: rgb(0, 0, 0); white-space: nowrap; transform: scaleX(0.9995); transform-origin: 50% 50%;">07/08/2022</span></div>
<div class="tc" style="left:370px;top:369px;width:600px;height:13px;"><span class="ti" style="font: 400 11px / 13px &quot;DejaVu Sans Condensed&quot;, &quot;DejaVu Sans&quot;, &quot;Liberation Sans&quot;, sans-serif; color: rgb(0, 0, 0); white-space: nowrap; transform: scaleX(0.9943); transform-origin: 50% 50%;">TV/ENTRETENIMENTO</span></div>
<div class="tc" style="left:577px;top:369px;width:600px;height:13px;"><span class="ti" style="font: 400 11px / 13px &quot;DejaVu Sans Condensed&quot;, &quot;DejaVu Sans&quot;, &quot;Liberation Sans&quot;, sans-serif; color: rgb(0, 0, 0); white-space: nowrap; transform: scaleX(1.012); transform-origin: 50% 50%;">R$23,45</span></div>
<div class="tc" style="left:737px;top:369px;width:600px;height:13px;"><span class="ti" style="font: 400 11px / 13px &quot;DejaVu Sans Condensed&quot;, &quot;DejaVu Sans&quot;, &quot;Liberation Sans&quot;, sans-serif; color: rgb(0, 0, 0); white-space: nowrap; transform: scaleX(0.9995); transform-origin: 50% 50%;">13/08/2022</span></div>
<div class="tc" style="left:859px;top:369px;width:600px;height:13px;"><span class="ti" style="font: 400 11px / 13px &quot;DejaVu Sans Condensed&quot;, &quot;DejaVu Sans&quot;, &quot;Liberation Sans&quot;, sans-serif; color: rgb(0, 0, 0); white-space: nowrap; transform: scaleX(0.9798); transform-origin: 50% 50%;">1 - 1</span></div>
<div class="tc" style="left:91px;top:382px;width:600px;height:13px;"><span class="ti" style="font: 400 11px / 13px &quot;DejaVu Sans Condensed&quot;, &quot;DejaVu Sans&quot;, &quot;Liberation Sans&quot;, sans-serif; color: rgb(0, 0, 0); white-space: nowrap; transform: scaleX(0.8734); transform-origin: 50% 50%;">2</span></div>
<div class="tc" style="left:163px;top:382px;width:600px;height:13px;"><span class="ti" style="font: 400 11px / 13px &quot;DejaVu Sans Condensed&quot;, &quot;DejaVu Sans&quot;, &quot;Liberation Sans&quot;, sans-serif; color: rgb(0, 0, 0); white-space: nowrap; transform: scaleX(0.9995); transform-origin: 50% 50%;">15/07/2022</span></div>
<div class="tc" style="left:370px;top:382px;width:600px;height:13px;"><span class="ti" style="font: 400 11px / 13px &quot;DejaVu Sans Condensed&quot;, &quot;DejaVu Sans&quot;, &quot;Liberation Sans&quot;, sans-serif; color: rgb(0, 0, 0); white-space: nowrap; transform: scaleX(1.0475); transform-origin: 50% 50%;">INFORMÁTICA</span></div>
<div class="tc" style="left:577px;top:382px;width:600px;height:13px;"><span class="ti" style="font: 400 11px / 13px &quot;DejaVu Sans Condensed&quot;, &quot;DejaVu Sans&quot;, &quot;Liberation Sans&quot;, sans-serif; color: rgb(0, 0, 0); white-space: nowrap; transform: scaleX(1.012); transform-origin: 50% 50%;">R$28,30</span></div>
<div class="tc" style="left:737px;top:382px;width:600px;height:13px;"><span class="ti" style="font: 400 11px / 13px &quot;DejaVu Sans Condensed&quot;, &quot;DejaVu Sans&quot;, &quot;Liberation Sans&quot;, sans-serif; color: rgb(0, 0, 0); white-space: nowrap; transform: scaleX(0.9995); transform-origin: 50% 50%;">13/08/2022</span></div>
<div class="tc" style="left:859px;top:382px;width:600px;height:13px;"><span class="ti" style="font: 400 11px / 13px &quot;DejaVu Sans Condensed&quot;, &quot;DejaVu Sans&quot;, &quot;Liberation Sans&quot;, sans-serif; color: rgb(0, 0, 0); white-space: nowrap; transform: scaleX(0.9798); transform-origin: 50% 50%;">1 - 3</span></div>
<div class="tc" style="left:91px;top:395px;width:600px;height:13px;"><span class="ti" style="font: 400 11px / 13px &quot;DejaVu Sans Condensed&quot;, &quot;DejaVu Sans&quot;, &quot;Liberation Sans&quot;, sans-serif; color: rgb(0, 0, 0); white-space: nowrap; transform: scaleX(0.8734); transform-origin: 50% 50%;">3</span></div>
<div class="tc" style="left:163px;top:395px;width:600px;height:13px;"><span class="ti" style="font: 400 11px / 13px &quot;DejaVu Sans Condensed&quot;, &quot;DejaVu Sans&quot;, &quot;Liberation Sans&quot;, sans-serif; color: rgb(0, 0, 0); white-space: nowrap; transform: scaleX(0.9995); transform-origin: 50% 50%;">15/07/2022</span></div>
<div class="tc" style="left:370px;top:395px;width:600px;height:13px;"><span class="ti" style="font: 400 11px / 13px &quot;DejaVu Sans Condensed&quot;, &quot;DejaVu Sans&quot;, &quot;Liberation Sans&quot;, sans-serif; color: rgb(0, 0, 0); white-space: nowrap; transform: scaleX(1.0475); transform-origin: 50% 50%;">INFORMÁTICA</span></div>
<div class="tc" style="left:577px;top:395px;width:600px;height:13px;"><span class="ti" style="font: 400 11px / 13px &quot;DejaVu Sans Condensed&quot;, &quot;DejaVu Sans&quot;, &quot;Liberation Sans&quot;, sans-serif; color: rgb(0, 0, 0); white-space: nowrap; transform: scaleX(1.012); transform-origin: 50% 50%;">R$28,30</span></div>
<div class="tc" style="left:737px;top:395px;width:600px;height:13px;"><span class="ti" style="font: 400 11px / 13px &quot;DejaVu Sans Condensed&quot;, &quot;DejaVu Sans&quot;, &quot;Liberation Sans&quot;, sans-serif; color: rgb(0, 0, 0); white-space: nowrap; transform: scaleX(0.9995); transform-origin: 50% 50%;">13/09/2022</span></div>
<div class="tc" style="left:859px;top:395px;width:600px;height:13px;"><span class="ti" style="font: 400 11px / 13px &quot;DejaVu Sans Condensed&quot;, &quot;DejaVu Sans&quot;, &quot;Liberation Sans&quot;, sans-serif; color: rgb(0, 0, 0); white-space: nowrap; transform: scaleX(0.9798); transform-origin: 50% 50%;">2 - 3</span></div>
<div class="tc" style="left:91px;top:408px;width:600px;height:13px;"><span class="ti" style="font: 400 11px / 13px &quot;DejaVu Sans Condensed&quot;, &quot;DejaVu Sans&quot;, &quot;Liberation Sans&quot;, sans-serif; color: rgb(0, 0, 0); white-space: nowrap; transform: scaleX(0.8734); transform-origin: 50% 50%;">4</span></div>
<div class="tc" style="left:163px;top:408px;width:600px;height:13px;"><span class="ti" style="font: 400 11px / 13px &quot;DejaVu Sans Condensed&quot;, &quot;DejaVu Sans&quot;, &quot;Liberation Sans&quot;, sans-serif; color: rgb(0, 0, 0); white-space: nowrap; transform: scaleX(0.9995); transform-origin: 50% 50%;">15/07/2022</span></div>
<div class="tc" style="left:370px;top:408px;width:600px;height:13px;"><span class="ti" style="font: 400 11px / 13px &quot;DejaVu Sans Condensed&quot;, &quot;DejaVu Sans&quot;, &quot;Liberation Sans&quot;, sans-serif; color: rgb(0, 0, 0); white-space: nowrap; transform: scaleX(1.0475); transform-origin: 50% 50%;">INFORMÁTICA</span></div>
<div class="tc" style="left:577px;top:408px;width:600px;height:13px;"><span class="ti" style="font: 400 11px / 13px &quot;DejaVu Sans Condensed&quot;, &quot;DejaVu Sans&quot;, &quot;Liberation Sans&quot;, sans-serif; color: rgb(0, 0, 0); white-space: nowrap; transform: scaleX(1.012); transform-origin: 50% 50%;">R$28,30</span></div>
<div class="tc" style="left:737px;top:408px;width:600px;height:13px;"><span class="ti" style="font: 400 11px / 13px &quot;DejaVu Sans Condensed&quot;, &quot;DejaVu Sans&quot;, &quot;Liberation Sans&quot;, sans-serif; color: rgb(0, 0, 0); white-space: nowrap; transform: scaleX(0.9995); transform-origin: 50% 50%;">13/10/2022</span></div>
<div class="tc" style="left:859px;top:408px;width:600px;height:13px;"><span class="ti" style="font: 400 11px / 13px &quot;DejaVu Sans Condensed&quot;, &quot;DejaVu Sans&quot;, &quot;Liberation Sans&quot;, sans-serif; color: rgb(0, 0, 0); white-space: nowrap; transform: scaleX(0.9798); transform-origin: 50% 50%;">3 - 3</span></div>
<div class="tc" style="left:91px;top:421px;width:600px;height:13px;"><span class="ti" style="font: 400 11px / 13px &quot;DejaVu Sans Condensed&quot;, &quot;DejaVu Sans&quot;, &quot;Liberation Sans&quot;, sans-serif; color: rgb(0, 0, 0); white-space: nowrap; transform: scaleX(0.8734); transform-origin: 50% 50%;">5</span></div>
<div class="tc" style="left:163px;top:421px;width:600px;height:13px;"><span class="ti" style="font: 400 11px / 13px &quot;DejaVu Sans Condensed&quot;, &quot;DejaVu Sans&quot;, &quot;Liberation Sans&quot;, sans-serif; color: rgb(0, 0, 0); white-space: nowrap; transform: scaleX(0.9995); transform-origin: 50% 50%;">22/07/2022</span></div>
<div class="tc" style="left:370px;top:421px;width:600px;height:13px;"><span class="ti" style="font: 400 11px / 13px &quot;DejaVu Sans Condensed&quot;, &quot;DejaVu Sans&quot;, &quot;Liberation Sans&quot;, sans-serif; color: rgb(0, 0, 0); white-space: nowrap; transform: scaleX(1.0156); transform-origin: 50% 50%;">MERCADO</span></div>
<div class="tc" style="left:577px;top:421px;width:600px;height:13px;"><span class="ti" style="font: 400 11px / 13px &quot;DejaVu Sans Condensed&quot;, &quot;DejaVu Sans&quot;, &quot;Liberation Sans&quot;, sans-serif; color: rgb(0, 0, 0); white-space: nowrap; transform: scaleX(1.012); transform-origin: 50% 50%;">R$50,00</span></div>
<div class="tc" style="left:737px;top:421px;width:600px;height:13px;"><span class="ti" style="font: 400 11px / 13px &quot;DejaVu Sans Condensed&quot;, &quot;DejaVu Sans&quot;, &quot;Liberation Sans&quot;, sans-serif; color: rgb(0, 0, 0); white-space: nowrap; transform: scaleX(0.9995); transform-origin: 50% 50%;">13/08/2022</span></div>
<div class="tc" style="left:859px;top:421px;width:600px;height:13px;"><span class="ti" style="font: 400 11px / 13px &quot;DejaVu Sans Condensed&quot;, &quot;DejaVu Sans&quot;, &quot;Liberation Sans&quot;, sans-serif; color: rgb(0, 0, 0); white-space: nowrap; transform: scaleX(0.9798); transform-origin: 50% 50%;">1 - 1</span></div>
<div class="tc" style="left:91px;top:434px;width:600px;height:13px;"><span class="ti" style="font: 400 11px / 13px &quot;DejaVu Sans Condensed&quot;, &quot;DejaVu Sans&quot;, &quot;Liberation Sans&quot;, sans-serif; color: rgb(0, 0, 0); white-space: nowrap; transform: scaleX(0.8734); transform-origin: 50% 50%;">6</span></div>
<div class="tc" style="left:163px;top:434px;width:600px;height:13px;"><span class="ti" style="font: 400 11px / 13px &quot;DejaVu Sans Condensed&quot;, &quot;DejaVu Sans&quot;, &quot;Liberation Sans&quot;, sans-serif; color: rgb(0, 0, 0); white-space: nowrap; transform: scaleX(0.9995); transform-origin: 50% 50%;">01/07/2022</span></div>
<div class="tc" style="left:370px;top:434px;width:600px;height:13px;"><span class="ti" style="font: 400 11px / 13px &quot;DejaVu Sans Condensed&quot;, &quot;DejaVu Sans&quot;, &quot;Liberation Sans&quot;, sans-serif; color: rgb(0, 0, 0); white-space: nowrap; transform: scaleX(0.9996); transform-origin: 50% 50%;">VEÍCULO</span></div>
<div class="tc" style="left:577px;top:434px;width:600px;height:13px;"><span class="ti" style="font: 400 11px / 13px &quot;DejaVu Sans Condensed&quot;, &quot;DejaVu Sans&quot;, &quot;Liberation Sans&quot;, sans-serif; color: rgb(0, 0, 0); white-space: nowrap; transform: scaleX(1.0042); transform-origin: 50% 50%;">R$325,00</span></div>
<div class="tc" style="left:737px;top:434px;width:600px;height:13px;"><span class="ti" style="font: 400 11px / 13px &quot;DejaVu Sans Condensed&quot;, &quot;DejaVu Sans&quot;, &quot;Liberation Sans&quot;, sans-serif; color: rgb(0, 0, 0); white-space: nowrap; transform: scaleX(0.9995); transform-origin: 50% 50%;">08/08/2022</span></div>
<div class="tc" style="left:859px;top:434px;width:600px;height:13px;"><span class="ti" style="font: 400 11px / 13px &quot;DejaVu Sans Condensed&quot;, &quot;DejaVu Sans&quot;, &quot;Liberation Sans&quot;, sans-serif; color: rgb(0, 0, 0); white-space: nowrap; transform: scaleX(0.9798); transform-origin: 50% 50%;">1 - 2</span></div>
<div class="tc" style="left:91px;top:447px;width:600px;height:13px;"><span class="ti" style="font: 400 11px / 13px &quot;DejaVu Sans Condensed&quot;, &quot;DejaVu Sans&quot;, &quot;Liberation Sans&quot;, sans-serif; color: rgb(0, 0, 0); white-space: nowrap; transform: scaleX(0.8734); transform-origin: 50% 50%;">7</span></div>
<div class="tc" style="left:163px;top:447px;width:600px;height:13px;"><span class="ti" style="font: 400 11px / 13px &quot;DejaVu Sans Condensed&quot;, &quot;DejaVu Sans&quot;, &quot;Liberation Sans&quot;, sans-serif; color: rgb(0, 0, 0); white-space: nowrap; transform: scaleX(0.9995); transform-origin: 50% 50%;">01/07/2022</span></div>
<div class="tc" style="left:370px;top:447px;width:600px;height:13px;"><span class="ti" style="font: 400 11px / 13px &quot;DejaVu Sans Condensed&quot;, &quot;DejaVu Sans&quot;, &quot;Liberation Sans&quot;, sans-serif; color: rgb(0, 0, 0); white-space: nowrap; transform: scaleX(0.9996); transform-origin: 50% 50%;">VEÍCULO</span></div>
<div class="tc" style="left:577px;top:447px;width:600px;height:13px;"><span class="ti" style="font: 400 11px / 13px &quot;DejaVu Sans Condensed&quot;, &quot;DejaVu Sans&quot;, &quot;Liberation Sans&quot;, sans-serif; color: rgb(0, 0, 0); white-space: nowrap; transform: scaleX(1.0042); transform-origin: 50% 50%;">R$325,00</span></div>
<div class="tc" style="left:737px;top:447px;width:600px;height:13px;"><span class="ti" style="font: 400 11px / 13px &quot;DejaVu Sans Condensed&quot;, &quot;DejaVu Sans&quot;, &quot;Liberation Sans&quot;, sans-serif; color: rgb(0, 0, 0); white-space: nowrap; transform: scaleX(0.9995); transform-origin: 50% 50%;">08/09/2022</span></div>
<div class="tc" style="left:859px;top:447px;width:600px;height:13px;"><span class="ti" style="font: 400 11px / 13px &quot;DejaVu Sans Condensed&quot;, &quot;DejaVu Sans&quot;, &quot;Liberation Sans&quot;, sans-serif; color: rgb(0, 0, 0); white-space: nowrap; transform: scaleX(0.9798); transform-origin: 50% 50%;">2 - 2</span></div>
<div class="tc" style="left:91px;top:460px;width:600px;height:13px;"><span class="ti" style="font: 400 11px / 13px &quot;DejaVu Sans Condensed&quot;, &quot;DejaVu Sans&quot;, &quot;Liberation Sans&quot;, sans-serif; color: rgb(0, 0, 0); white-space: nowrap; transform: scaleX(0.8734); transform-origin: 50% 50%;">8</span></div>
<div class="tc" style="left:163px;top:460px;width:600px;height:13px;"><span class="ti" style="font: 400 11px / 13px &quot;DejaVu Sans Condensed&quot;, &quot;DejaVu Sans&quot;, &quot;Liberation Sans&quot;, sans-serif; color: rgb(0, 0, 0); white-space: nowrap; transform: scaleX(0.9995); transform-origin: 50% 50%;">01/07/2022</span></div>
<div class="tc" style="left:370px;top:460px;width:600px;height:13px;"><span class="ti" style="font: 400 11px / 13px &quot;DejaVu Sans Condensed&quot;, &quot;DejaVu Sans&quot;, &quot;Liberation Sans&quot;, sans-serif; color: rgb(0, 0, 0); white-space: nowrap; transform: scaleX(1.0363); transform-origin: 50% 50%;">FACE ADS</span></div>
<div class="tc" style="left:577px;top:460px;width:600px;height:13px;"><span class="ti" style="font: 400 11px / 13px &quot;DejaVu Sans Condensed&quot;, &quot;DejaVu Sans&quot;, &quot;Liberation Sans&quot;, sans-serif; color: rgb(0, 0, 0); white-space: nowrap; transform: scaleX(1.0226); transform-origin: 50% 50%;">R$5,43</span></div>
<div class="tc" style="left:737px;top:460px;width:600px;height:13px;"><span class="ti" style="font: 400 11px / 13px &quot;DejaVu Sans Condensed&quot;, &quot;DejaVu Sans&quot;, &quot;Liberation Sans&quot;, sans-serif; color: rgb(0, 0, 0); white-space: nowrap; transform: scaleX(0.9995); transform-origin: 50% 50%;">08/08/2022</span></div>
<div class="tc" style="left:859px;top:460px;width:600px;height:13px;"><span class="ti" style="font: 400 11px / 13px &quot;DejaVu Sans Condensed&quot;, &quot;DejaVu Sans&quot;, &quot;Liberation Sans&quot;, sans-serif; color: rgb(0, 0, 0); white-space: nowrap; transform: scaleX(0.9798); transform-origin: 50% 50%;">1 - 1</span></div>
<div class="tc" style="left:91px;top:473px;width:600px;height:13px;"><span class="ti" style="font: 400 11px / 13px &quot;DejaVu Sans Condensed&quot;, &quot;DejaVu Sans&quot;, &quot;Liberation Sans&quot;, sans-serif; color: rgb(0, 0, 0); white-space: nowrap; transform: scaleX(0.8734); transform-origin: 50% 50%;">9</span></div>
<div class="tc" style="left:163px;top:473px;width:600px;height:13px;"><span class="ti" style="font: 400 11px / 13px &quot;DejaVu Sans Condensed&quot;, &quot;DejaVu Sans&quot;, &quot;Liberation Sans&quot;, sans-serif; color: rgb(0, 0, 0); white-space: nowrap; transform: scaleX(0.9995); transform-origin: 50% 50%;">01/07/2022</span></div>
<div class="tc" style="left:370px;top:473px;width:600px;height:13px;"><span class="ti" style="font: 400 11px / 13px &quot;DejaVu Sans Condensed&quot;, &quot;DejaVu Sans&quot;, &quot;Liberation Sans&quot;, sans-serif; color: rgb(0, 0, 0); white-space: nowrap; transform: scaleX(1.0394); transform-origin: 50% 50%;">CASA</span></div>
<div class="tc" style="left:577px;top:473px;width:600px;height:13px;"><span class="ti" style="font: 400 11px / 13px &quot;DejaVu Sans Condensed&quot;, &quot;DejaVu Sans&quot;, &quot;Liberation Sans&quot;, sans-serif; color: rgb(0, 0, 0); white-space: nowrap; transform: scaleX(1.012); transform-origin: 50% 50%;">R$52,65</span></div>
<div class="tc" style="left:737px;top:473px;width:600px;height:13px;"><span class="ti" style="font: 400 11px / 13px &quot;DejaVu Sans Condensed&quot;, &quot;DejaVu Sans&quot;, &quot;Liberation Sans&quot;, sans-serif; color: rgb(0, 0, 0); white-space: nowrap; transform: scaleX(0.9995); transform-origin: 50% 50%;">08/08/2022</span></div>
<div class="tc" style="left:859px;top:473px;width:600px;height:13px;"><span class="ti" style="font: 400 11px / 13px &quot;DejaVu Sans Condensed&quot;, &quot;DejaVu Sans&quot;, &quot;Liberation Sans&quot;, sans-serif; color: rgb(0, 0, 0); white-space: nowrap; transform: scaleX(0.9798); transform-origin: 50% 50%;">1 - 7</span></div>
<div class="tc" style="left:91px;top:486px;width:600px;height:13px;"><span class="ti" style="font: 400 11px / 13px &quot;DejaVu Sans Condensed&quot;, &quot;DejaVu Sans&quot;, &quot;Liberation Sans&quot;, sans-serif; color: rgb(0, 0, 0); white-space: nowrap; transform: scaleX(0.8734); transform-origin: 50% 50%;">10</span></div>
<div class="tc" style="left:163px;top:486px;width:600px;height:13px;"><span class="ti" style="font: 400 11px / 13px &quot;DejaVu Sans Condensed&quot;, &quot;DejaVu Sans&quot;, &quot;Liberation Sans&quot;, sans-serif; color: rgb(0, 0, 0); white-space: nowrap; transform: scaleX(0.9995); transform-origin: 50% 50%;">01/07/2022</span></div>
<div class="tc" style="left:370px;top:486px;width:600px;height:13px;"><span class="ti" style="font: 400 11px / 13px &quot;DejaVu Sans Condensed&quot;, &quot;DejaVu Sans&quot;, &quot;Liberation Sans&quot;, sans-serif; color: rgb(0, 0, 0); white-space: nowrap; transform: scaleX(1.0394); transform-origin: 50% 50%;">CASA</span></div>
<div class="tc" style="left:577px;top:486px;width:600px;height:13px;"><span class="ti" style="font: 400 11px / 13px &quot;DejaVu Sans Condensed&quot;, &quot;DejaVu Sans&quot;, &quot;Liberation Sans&quot;, sans-serif; color: rgb(0, 0, 0); white-space: nowrap; transform: scaleX(1.012); transform-origin: 50% 50%;">R$52,65</span></div>
<div class="tc" style="left:737px;top:486px;width:600px;height:13px;"><span class="ti" style="font: 400 11px / 13px &quot;DejaVu Sans Condensed&quot;, &quot;DejaVu Sans&quot;, &quot;Liberation Sans&quot;, sans-serif; color: rgb(0, 0, 0); white-space: nowrap; transform: scaleX(0.9995); transform-origin: 50% 50%;">08/09/2022</span></div>
<div class="tc" style="left:859px;top:486px;width:600px;height:13px;"><span class="ti" style="font: 400 11px / 13px &quot;DejaVu Sans Condensed&quot;, &quot;DejaVu Sans&quot;, &quot;Liberation Sans&quot;, sans-serif; color: rgb(0, 0, 0); white-space: nowrap; transform: scaleX(0.9798); transform-origin: 50% 50%;">2 - 7</span></div>
<div class="tc" style="left:91px;top:499px;width:600px;height:13px;"><span class="ti" style="font: 400 11px / 13px &quot;DejaVu Sans Condensed&quot;, &quot;DejaVu Sans&quot;, &quot;Liberation Sans&quot;, sans-serif; color: rgb(0, 0, 0); white-space: nowrap; transform: scaleX(0.8734); transform-origin: 50% 50%;">11</span></div>
<div class="tc" style="left:163px;top:499px;width:600px;height:13px;"><span class="ti" style="font: 400 11px / 13px &quot;DejaVu Sans Condensed&quot;, &quot;DejaVu Sans&quot;, &quot;Liberation Sans&quot;, sans-serif; color: rgb(0, 0, 0); white-space: nowrap; transform: scaleX(0.9995); transform-origin: 50% 50%;">01/07/2022</span></div>
<div class="tc" style="left:370px;top:499px;width:600px;height:13px;"><span class="ti" style="font: 400 11px / 13px &quot;DejaVu Sans Condensed&quot;, &quot;DejaVu Sans&quot;, &quot;Liberation Sans&quot;, sans-serif; color: rgb(0, 0, 0); white-space: nowrap; transform: scaleX(1.0394); transform-origin: 50% 50%;">CASA</span></div>
<div class="tc" style="left:577px;top:499px;width:600px;height:13px;"><span class="ti" style="font: 400 11px / 13px &quot;DejaVu Sans Condensed&quot;, &quot;DejaVu Sans&quot;, &quot;Liberation Sans&quot;, sans-serif; color: rgb(0, 0, 0); white-space: nowrap; transform: scaleX(1.012); transform-origin: 50% 50%;">R$52,65</span></div>
<div class="tc" style="left:737px;top:499px;width:600px;height:13px;"><span class="ti" style="font: 400 11px / 13px &quot;DejaVu Sans Condensed&quot;, &quot;DejaVu Sans&quot;, &quot;Liberation Sans&quot;, sans-serif; color: rgb(0, 0, 0); white-space: nowrap; transform: scaleX(0.9995); transform-origin: 50% 50%;">08/10/2022</span></div>
<div class="tc" style="left:859px;top:499px;width:600px;height:13px;"><span class="ti" style="font: 400 11px / 13px &quot;DejaVu Sans Condensed&quot;, &quot;DejaVu Sans&quot;, &quot;Liberation Sans&quot;, sans-serif; color: rgb(0, 0, 0); white-space: nowrap; transform: scaleX(0.9798); transform-origin: 50% 50%;">3 - 7</span></div>
<div class="tc" style="left:91px;top:512px;width:600px;height:13px;"><span class="ti" style="font: 400 11px / 13px &quot;DejaVu Sans Condensed&quot;, &quot;DejaVu Sans&quot;, &quot;Liberation Sans&quot;, sans-serif; color: rgb(0, 0, 0); white-space: nowrap; transform: scaleX(0.8734); transform-origin: 50% 50%;">12</span></div>
<div class="tc" style="left:163px;top:512px;width:600px;height:13px;"><span class="ti" style="font: 400 11px / 13px &quot;DejaVu Sans Condensed&quot;, &quot;DejaVu Sans&quot;, &quot;Liberation Sans&quot;, sans-serif; color: rgb(0, 0, 0); white-space: nowrap; transform: scaleX(0.9995); transform-origin: 50% 50%;">01/07/2022</span></div>
<div class="tc" style="left:370px;top:512px;width:600px;height:13px;"><span class="ti" style="font: 400 11px / 13px &quot;DejaVu Sans Condensed&quot;, &quot;DejaVu Sans&quot;, &quot;Liberation Sans&quot;, sans-serif; color: rgb(0, 0, 0); white-space: nowrap; transform: scaleX(1.0394); transform-origin: 50% 50%;">CASA</span></div>
<div class="tc" style="left:577px;top:512px;width:600px;height:13px;"><span class="ti" style="font: 400 11px / 13px &quot;DejaVu Sans Condensed&quot;, &quot;DejaVu Sans&quot;, &quot;Liberation Sans&quot;, sans-serif; color: rgb(0, 0, 0); white-space: nowrap; transform: scaleX(1.012); transform-origin: 50% 50%;">R$52,65</span></div>
<div class="tc" style="left:737px;top:512px;width:600px;height:13px;"><span class="ti" style="font: 400 11px / 13px &quot;DejaVu Sans Condensed&quot;, &quot;DejaVu Sans&quot;, &quot;Liberation Sans&quot;, sans-serif; color: rgb(0, 0, 0); white-space: nowrap; transform: scaleX(0.9995); transform-origin: 50% 50%;">08/11/2022</span></div>
<div class="tc" style="left:859px;top:512px;width:600px;height:13px;"><span class="ti" style="font: 400 11px / 13px &quot;DejaVu Sans Condensed&quot;, &quot;DejaVu Sans&quot;, &quot;Liberation Sans&quot;, sans-serif; color: rgb(0, 0, 0); white-space: nowrap; transform: scaleX(0.9798); transform-origin: 50% 50%;">4 - 7</span></div>
<div class="tc" style="left:91px;top:525px;width:600px;height:13px;"><span class="ti" style="font: 400 11px / 13px &quot;DejaVu Sans Condensed&quot;, &quot;DejaVu Sans&quot;, &quot;Liberation Sans&quot;, sans-serif; color: rgb(0, 0, 0); white-space: nowrap; transform: scaleX(0.8734); transform-origin: 50% 50%;">13</span></div>
<div class="tc" style="left:163px;top:525px;width:600px;height:13px;"><span class="ti" style="font: 400 11px / 13px &quot;DejaVu Sans Condensed&quot;, &quot;DejaVu Sans&quot;, &quot;Liberation Sans&quot;, sans-serif; color: rgb(0, 0, 0); white-space: nowrap; transform: scaleX(0.9995); transform-origin: 50% 50%;">01/07/2022</span></div>
<div class="tc" style="left:370px;top:525px;width:600px;height:13px;"><span class="ti" style="font: 400 11px / 13px &quot;DejaVu Sans Condensed&quot;, &quot;DejaVu Sans&quot;, &quot;Liberation Sans&quot;, sans-serif; color: rgb(0, 0, 0); white-space: nowrap; transform: scaleX(1.0394); transform-origin: 50% 50%;">CASA</span></div>
<div class="tc" style="left:577px;top:525px;width:600px;height:13px;"><span class="ti" style="font: 400 11px / 13px &quot;DejaVu Sans Condensed&quot;, &quot;DejaVu Sans&quot;, &quot;Liberation Sans&quot;, sans-serif; color: rgb(0, 0, 0); white-space: nowrap; transform: scaleX(1.012); transform-origin: 50% 50%;">R$52,65</span></div>
<div class="tc" style="left:737px;top:525px;width:600px;height:13px;"><span class="ti" style="font: 400 11px / 13px &quot;DejaVu Sans Condensed&quot;, &quot;DejaVu Sans&quot;, &quot;Liberation Sans&quot;, sans-serif; color: rgb(0, 0, 0); white-space: nowrap; transform: scaleX(0.9995); transform-origin: 50% 50%;">08/12/2022</span></div>
<div class="tc" style="left:859px;top:525px;width:600px;height:13px;"><span class="ti" style="font: 400 11px / 13px &quot;DejaVu Sans Condensed&quot;, &quot;DejaVu Sans&quot;, &quot;Liberation Sans&quot;, sans-serif; color: rgb(0, 0, 0); white-space: nowrap; transform: scaleX(0.9798); transform-origin: 50% 50%;">5 - 7</span></div>
<div class="tc" style="left:91px;top:538px;width:600px;height:13px;"><span class="ti" style="font: 400 11px / 13px &quot;DejaVu Sans Condensed&quot;, &quot;DejaVu Sans&quot;, &quot;Liberation Sans&quot;, sans-serif; color: rgb(0, 0, 0); white-space: nowrap; transform: scaleX(0.8734); transform-origin: 50% 50%;">14</span></div>
<div class="tc" style="left:163px;top:538px;width:600px;height:13px;"><span class="ti" style="font: 400 11px / 13px &quot;DejaVu Sans Condensed&quot;, &quot;DejaVu Sans&quot;, &quot;Liberation Sans&quot;, sans-serif; color: rgb(0, 0, 0); white-space: nowrap; transform: scaleX(0.9995); transform-origin: 50% 50%;">01/07/2022</span></div>
<div class="tc" style="left:370px;top:538px;width:600px;height:13px;"><span class="ti" style="font: 400 11px / 13px &quot;DejaVu Sans Condensed&quot;, &quot;DejaVu Sans&quot;, &quot;Liberation Sans&quot;, sans-serif; color: rgb(0, 0, 0); white-space: nowrap; transform: scaleX(1.0394); transform-origin: 50% 50%;">CASA</span></div>
<div class="tc" style="left:577px;top:538px;width:600px;height:13px;"><span class="ti" style="font: 400 11px / 13px &quot;DejaVu Sans Condensed&quot;, &quot;DejaVu Sans&quot;, &quot;Liberation Sans&quot;, sans-serif; color: rgb(0, 0, 0); white-space: nowrap; transform: scaleX(1.012); transform-origin: 50% 50%;">R$52,65</span></div>
<div class="tc" style="left:737px;top:538px;width:600px;height:13px;"><span class="ti" style="font: 400 11px / 13px &quot;DejaVu Sans Condensed&quot;, &quot;DejaVu Sans&quot;, &quot;Liberation Sans&quot;, sans-serif; color: rgb(0, 0, 0); white-space: nowrap; transform: scaleX(0.9995); transform-origin: 50% 50%;">08/01/2023</span></div>
<div class="tc" style="left:859px;top:538px;width:600px;height:13px;"><span class="ti" style="font: 400 11px / 13px &quot;DejaVu Sans Condensed&quot;, &quot;DejaVu Sans&quot;, &quot;Liberation Sans&quot;, sans-serif; color: rgb(0, 0, 0); white-space: nowrap; transform: scaleX(0.9798); transform-origin: 50% 50%;">6 - 7</span></div>
<div class="tc" style="left:91px;top:551px;width:600px;height:13px;"><span class="ti" style="font: 400 11px / 13px &quot;DejaVu Sans Condensed&quot;, &quot;DejaVu Sans&quot;, &quot;Liberation Sans&quot;, sans-serif; color: rgb(0, 0, 0); white-space: nowrap; transform: scaleX(0.8734); transform-origin: 50% 50%;">15</span></div>
<div class="tc" style="left:163px;top:551px;width:600px;height:13px;"><span class="ti" style="font: 400 11px / 13px &quot;DejaVu Sans Condensed&quot;, &quot;DejaVu Sans&quot;, &quot;Liberation Sans&quot;, sans-serif; color: rgb(0, 0, 0); white-space: nowrap; transform: scaleX(0.9995); transform-origin: 50% 50%;">01/07/2022</span></div>
<div class="tc" style="left:370px;top:551px;width:600px;height:13px;"><span class="ti" style="font: 400 11px / 13px &quot;DejaVu Sans Condensed&quot;, &quot;DejaVu Sans&quot;, &quot;Liberation Sans&quot;, sans-serif; color: rgb(0, 0, 0); white-space: nowrap; transform: scaleX(1.0394); transform-origin: 50% 50%;">CASA</span></div>
<div class="tc" style="left:577px;top:551px;width:600px;height:13px;"><span class="ti" style="font: 400 11px / 13px &quot;DejaVu Sans Condensed&quot;, &quot;DejaVu Sans&quot;, &quot;Liberation Sans&quot;, sans-serif; color: rgb(0, 0, 0); white-space: nowrap; transform: scaleX(1.012); transform-origin: 50% 50%;">R$52,65</span></div>
<div class="tc" style="left:737px;top:551px;width:600px;height:13px;"><span class="ti" style="font: 400 11px / 13px &quot;DejaVu Sans Condensed&quot;, &quot;DejaVu Sans&quot;, &quot;Liberation Sans&quot;, sans-serif; color: rgb(0, 0, 0); white-space: nowrap; transform: scaleX(0.9995); transform-origin: 50% 50%;">08/02/2023</span></div>
<div class="tc" style="left:859px;top:551px;width:600px;height:13px;"><span class="ti" style="font: 400 11px / 13px &quot;DejaVu Sans Condensed&quot;, &quot;DejaVu Sans&quot;, &quot;Liberation Sans&quot;, sans-serif; color: rgb(0, 0, 0); white-space: nowrap; transform: scaleX(0.9798); transform-origin: 50% 50%;">7 - 7</span></div>
<div class="tc" style="left:91px;top:564px;width:600px;height:13px;"><span class="ti" style="font: 400 11px / 13px &quot;DejaVu Sans Condensed&quot;, &quot;DejaVu Sans&quot;, &quot;Liberation Sans&quot;, sans-serif; color: rgb(0, 0, 0); white-space: nowrap; transform: scaleX(0.8734); transform-origin: 50% 50%;">16</span></div>
<div class="tc" style="left:163px;top:564px;width:600px;height:13px;"><span class="ti" style="font: 400 11px / 13px &quot;DejaVu Sans Condensed&quot;, &quot;DejaVu Sans&quot;, &quot;Liberation Sans&quot;, sans-serif; color: rgb(0, 0, 0); white-space: nowrap; transform: scaleX(0.9995); transform-origin: 50% 50%;">01/07/2022</span></div>
<div class="tc" style="left:370px;top:564px;width:600px;height:13px;"><span class="ti" style="font: 400 11px / 13px &quot;DejaVu Sans Condensed&quot;, &quot;DejaVu Sans&quot;, &quot;Liberation Sans&quot;, sans-serif; color: rgb(0, 0, 0); white-space: nowrap; transform: scaleX(1.0394); transform-origin: 50% 50%;">CASA</span></div>
<div class="tc" style="left:577px;top:564px;width:600px;height:13px;"><span class="ti" style="font: 400 11px / 13px &quot;DejaVu Sans Condensed&quot;, &quot;DejaVu Sans&quot;, &quot;Liberation Sans&quot;, sans-serif; color: rgb(0, 0, 0); white-space: nowrap; transform: scaleX(1.012); transform-origin: 50% 50%;">R$91,27</span></div>
<div class="tc" style="left:737px;top:564px;width:600px;height:13px;"><span class="ti" style="font: 400 11px / 13px &quot;DejaVu Sans Condensed&quot;, &quot;DejaVu Sans&quot;, &quot;Liberation Sans&quot;, sans-serif; color: rgb(0, 0, 0); white-space: nowrap; transform: scaleX(0.9995); transform-origin: 50% 50%;">08/08/2022</span></div>
<div class="tc" style="left:859px;top:564px;width:600px;height:13px;"><span class="ti" style="font: 400 11px / 13px &quot;DejaVu Sans Condensed&quot;, &quot;DejaVu Sans&quot;, &quot;Liberation Sans&quot;, sans-serif; color: rgb(0, 0, 0); white-space: nowrap; transform: scaleX(0.9798); transform-origin: 50% 50%;">1 - 4</span></div>
<div class="tc" style="left:91px;top:577px;width:600px;height:13px;"><span class="ti" style="font: 400 11px / 13px &quot;DejaVu Sans Condensed&quot;, &quot;DejaVu Sans&quot;, &quot;Liberation Sans&quot;, sans-serif; color: rgb(0, 0, 0); white-space: nowrap; transform: scaleX(0.8734); transform-origin: 50% 50%;">17</span></div>
<div class="tc" style="left:163px;top:577px;width:600px;height:13px;"><span class="ti" style="font: 400 11px / 13px &quot;DejaVu Sans Condensed&quot;, &quot;DejaVu Sans&quot;, &quot;Liberation Sans&quot;, sans-serif; color: rgb(0, 0, 0); white-space: nowrap; transform: scaleX(0.9995); transform-origin: 50% 50%;">01/07/2022</span></div>
<div class="tc" style="left:370px;top:577px;width:600px;height:13px;"><span class="ti" style="font: 400 11px / 13px &quot;DejaVu Sans Condensed&quot;, &quot;DejaVu Sans&quot;, &quot;Liberation Sans&quot;, sans-serif; color: rgb(0, 0, 0); white-space: nowrap; transform: scaleX(1.0394); transform-origin: 50% 50%;">CASA</span></div>
<div class="tc" style="left:577px;top:577px;width:600px;height:13px;"><span class="ti" style="font: 400 11px / 13px &quot;DejaVu Sans Condensed&quot;, &quot;DejaVu Sans&quot;, &quot;Liberation Sans&quot;, sans-serif; color: rgb(0, 0, 0); white-space: nowrap; transform: scaleX(1.012); transform-origin: 50% 50%;">R$91,27</span></div>
<div class="tc" style="left:737px;top:577px;width:600px;height:13px;"><span class="ti" style="font: 400 11px / 13px &quot;DejaVu Sans Condensed&quot;, &quot;DejaVu Sans&quot;, &quot;Liberation Sans&quot;, sans-serif; color: rgb(0, 0, 0); white-space: nowrap; transform: scaleX(0.9995); transform-origin: 50% 50%;">08/09/2022</span></div>
<div class="tc" style="left:859px;top:577px;width:600px;height:13px;"><span class="ti" style="font: 400 11px / 13px &quot;DejaVu Sans Condensed&quot;, &quot;DejaVu Sans&quot;, &quot;Liberation Sans&quot;, sans-serif; color: rgb(0, 0, 0); white-space: nowrap; transform: scaleX(0.9798); transform-origin: 50% 50%;">2 - 4</span></div>
<div style="left:1221px;top:368px;width:17px;height:220px;background:repeating-conic-gradient(#fff 0 25%,#e4e4e4 0 50%) 0 0/2px 2px;"></div>
<div class="btn" style="left:1221px;top:368px;width:17px;height:16px;"></div>
<svg style="left:1226px;top:374px;" width="8" height="5" viewBox="0 0 8 5"><path d="M0 4.500h7l-3.500-4z" fill="#000"></path></svg>
<div class="btn" style="left:1221px;top:384px;width:17px;height:12px;"></div>
<div class="btn" style="left:1221px;top:572px;width:17px;height:16px;"></div>
<svg style="left:1226px;top:578px;" width="8" height="5" viewBox="0 0 8 5"><path d="M0 0h7l-3.500 4z" fill="#000"></path></svg>
<div class="btn" style="left:864px;top:614px;width:88px;height:24px;"></div>
<span class="t" style="left: 875px; top: 614px; font: 700 11px / 24px &quot;DejaVu Sans Condensed&quot;, &quot;DejaVu Sans&quot;, &quot;Liberation Sans&quot;, sans-serif; color: rgb(0, 0, 0); white-space: nowrap; transform: scaleX(1.0226); transform-origin: 0px 50%;">Salvar</span>
<div class="btn" style="left:960px;top:614px;width:88px;height:24px;"></div>
<span class="t" style="left: 964px; top: 614px; font: 700 11px / 24px &quot;DejaVu Sans Condensed&quot;, &quot;DejaVu Sans&quot;, &quot;Liberation Sans&quot;, sans-serif; color: rgb(0, 0, 0); white-space: nowrap; transform: scaleX(1.0156); transform-origin: 0px 50%;">Atualizar</span>
<div class="btn" style="left:1056px;top:614px;width:88px;height:24px;"></div>
<span class="t" style="left: 1071px; top: 614px; font: 700 11px / 24px &quot;DejaVu Sans Condensed&quot;, &quot;DejaVu Sans&quot;, &quot;Liberation Sans&quot;, sans-serif; color: rgb(0, 0, 0); white-space: nowrap; transform: scaleX(0.9526); transform-origin: 0px 50%;">Novo</span>
<div class="btn" style="left:1152px;top:614px;width:88px;height:24px;"></div>
<span class="t" style="left: 1162px; top: 614px; font: 700 11px / 24px &quot;DejaVu Sans Condensed&quot;, &quot;DejaVu Sans&quot;, &quot;Liberation Sans&quot;, sans-serif; color: rgb(0, 0, 0); white-space: nowrap; transform: scaleX(0.9809); transform-origin: 0px 50%;">Excluir</span>
<svg width="0" height="0" style="left:0;top:0"><defs><linearGradient id="gfl" x1="0" y1="0" x2="0" y2="1"><stop offset="0" stop-color="#6a6a6a"></stop><stop offset="1" stop-color="#2e2e2e"></stop></linearGradient><linearGradient id="glb" x1="0" y1="0" x2="0" y2="1"><stop offset="0" stop-color="#f4f8fc"></stop><stop offset="1" stop-color="#cfdcea"></stop></linearGradient><radialGradient id="grd" cx=".5" cy=".4" r=".6"><stop offset="0" stop-color="#e03a2c"></stop><stop offset=".7" stop-color="#b81410"></stop><stop offset="1" stop-color="#7a0808"></stop></radialGradient></defs></svg>
<svg style="left:919px;top:619px;" width="21" height="15" viewBox="0 0 21 15"><g><path d="M0 0h20.500v14h-19.500l-1-1z" fill="url(#gfl)"></path><path d="M3 0h14.500v6.500h-14.500z" fill="url(#glb)"></path><path d="M3 2h14.500M3 4h14.500" stroke="#b9c9dc" stroke-width=".6"></path><path d="M5 9h10.500v5h-10.500z" fill="#c4c4c4"></path><rect x="6.500" y="10" width="2.600" height="3.200" fill="#3a3a3a"></rect></g></svg>
<svg style="left:1020px;top:618px;" width="24" height="17" viewBox="0 0 24 17"><g><path d="M9.500 2.500a6.500 6.500 0 0 0-5.500 10l-2.500 1.200l6.500 1.500l.5-6l-2.200 1.600a3.800 3.800 0 0 1 3.200-5.300z" fill="#8c8c8c"></path><path d="M10.500 1.500h12M10.500 15.500h12" stroke="#d9a45a" stroke-width="1.800"></path><path d="M11.500 2.500h10c0 3.500-3.600 4.500-3.600 6s3.600 2.500 3.600 6h-10c0-3.500 3.600-4.500 3.600-6s-3.600-2.500-3.600-6z" fill="#dfeaf4" stroke="#98a8b8" stroke-width=".8"></path><path d="M13 14.200c1-2 2.400-2.400 3.500-2.400s2.500.4 3.500 2.400z" fill="#b8c6d4"></path></g></svg>
<svg style="left:1104px;top:616px;" width="28" height="20" viewBox="0 0 28 20"><g><path d="M1.500 5.500h17v10l-2.500 2.500h-14.500z" fill="#fafafa" stroke="#9a9a9a" stroke-width="1"></path><path d="M1 4h13v3.600h-13z" fill="#3fa535"></path><path d="M13 4.800h5v2h-5z" fill="#3fa535"></path><circle cx="19.800" cy="5.600" r="4.800" fill="#43b53a"></circle><path d="M16.800 5.600h6M19.800 2.600v6" stroke="#fff" stroke-width="1.800"></path></g></svg>
<svg style="left:1205px;top:617px;" width="24" height="17" viewBox="0 0 24 17"><g><ellipse cx="12" cy="8.600" rx="11.300" ry="7.400" fill="url(#grd)"></ellipse><path d="M8 5.200l8 6.800M16 5.200l-8 6.800" stroke="#fff" stroke-width="2.600" stroke-linecap="round"></path></g></svg>
<span class="t" style="left: 352px; top: 678px; font: 700 12px / 18px &quot;DejaVu Sans Condensed&quot;, &quot;DejaVu Sans&quot;, &quot;Liberation Sans&quot;, sans-serif; color: rgb(0, 0, 0); white-space: nowrap; transform: scaleX(1.0615); transform-origin: 0px 50%;">Selecione o Cartão</span>
<div class="tb" style="left:352px;top:694px;width:232px;height:24px;"></div>
<div class="cb" style="left:567px;top:695px;width:17px;height:23px;"></div>
<svg style="left:571px;top:704px;" width="8" height="5" viewBox="0 0 8 5"><path d="M0 0h7l-3.500 4z" fill="#000"></path></svg>
<span class="t" style="left: 592px; top: 678px; font: 700 12px / 18px &quot;DejaVu Sans Condensed&quot;, &quot;DejaVu Sans&quot;, &quot;Liberation Sans&quot;, sans-serif; color: rgb(0, 0, 0); white-space: nowrap; transform: scaleX(1.102); transform-origin: 0px 50%;">Mês</span>
<div class="tb" style="left:592px;top:694px;width:120px;height:24px;"></div>
<div class="cb" style="left:695px;top:695px;width:17px;height:23px;"></div>
<svg style="left:699px;top:704px;" width="8" height="5" viewBox="0 0 8 5"><path d="M0 0h7l-3.500 4z" fill="#000"></path></svg>
<span class="t" style="left: 720px; top: 678px; font: 700 12px / 18px &quot;DejaVu Sans Condensed&quot;, &quot;DejaVu Sans&quot;, &quot;Liberation Sans&quot;, sans-serif; color: rgb(0, 0, 0); white-space: nowrap; transform: scaleX(1.1079); transform-origin: 0px 50%;">Ano</span>
<div class="tb" style="left:720px;top:694px;width:72px;height:24px;"></div>
<span class="t" style="left: 800px; top: 678px; font: 700 12px / 18px &quot;DejaVu Sans Condensed&quot;, &quot;DejaVu Sans&quot;, &quot;Liberation Sans&quot;, sans-serif; color: rgb(0, 0, 0); white-space: nowrap; transform: scaleX(1.0723); transform-origin: 0px 50%;">Valor Fatura</span>
<div class="tb" style="left:800px;top:694px;width:104px;height:24px;"></div>
<span class="t" style="left: 912px; top: 678px; font: 700 12px / 18px &quot;DejaVu Sans Condensed&quot;, &quot;DejaVu Sans&quot;, &quot;Liberation Sans&quot;, sans-serif; color: rgb(0, 0, 0); white-space: nowrap; transform: scaleX(1.0736); transform-origin: 0px 50%;">Valor Pago</span>
<div class="tb" style="left:912px;top:694px;width:104px;height:24px;"></div>
<span class="t" style="left: 1024px; top: 678px; font: 700 12px / 18px &quot;DejaVu Sans Condensed&quot;, &quot;DejaVu Sans&quot;, &quot;Liberation Sans&quot;, sans-serif; color: rgb(0, 0, 0); white-space: nowrap; transform: scaleX(1.0423); transform-origin: 0px 50%;">Débito</span>
<div class="tb" style="left:1024px;top:694px;width:104px;height:24px;"></div>
<span class="t" style="left: 1136px; top: 678px; font: 700 12px / 18px &quot;DejaVu Sans Condensed&quot;, &quot;DejaVu Sans&quot;, &quot;Liberation Sans&quot;, sans-serif; color: rgb(0, 0, 0); white-space: nowrap; transform: scaleX(1.0713); transform-origin: 0px 50%;">Data Pgto</span>
<div class="tb" style="left:1136px;top:694px;width:104px;height:24px;"></div>
<div class="btn" style="left:960px;top:726px;width:88px;height:40px;"></div>
<span class="t" style="left: 971px; top: 725px; font: 700 11px / 40px &quot;DejaVu Sans Condensed&quot;, &quot;DejaVu Sans&quot;, &quot;Liberation Sans&quot;, sans-serif; color: rgb(0, 0, 0); white-space: nowrap; transform: scaleX(1.0226); transform-origin: 0px 50%;">Salvar</span>
<div class="btn" style="left:1056px;top:726px;width:88px;height:40px;"></div>
<span class="t" style="left: 1065px; top: 725px; font: 700 11px / 40px &quot;DejaVu Sans Condensed&quot;, &quot;DejaVu Sans&quot;, &quot;Liberation Sans&quot;, sans-serif; color: rgb(0, 0, 0); white-space: nowrap; transform: scaleX(1.0089); transform-origin: 0px 50%;">Limpar</span>
<div class="btn" style="left:1152px;top:726px;width:88px;height:40px;"></div>
<span class="t" style="left: 1170px; top: 725px; font: 700 11px / 40px &quot;DejaVu Sans Condensed&quot;, &quot;DejaVu Sans&quot;, &quot;Liberation Sans&quot;, sans-serif; color: rgb(0, 0, 0); white-space: nowrap; transform: scaleX(0.9445); transform-origin: 0px 50%;">PDF</span>
<svg style="left:1014px;top:735px;" width="23" height="23" viewBox="0 0 23 23"><g><path d="M0 0h22v22h-21l-1-1z" fill="url(#gfl)"></path><path d="M3.500 0h15v10h-15z" fill="url(#glb)"></path><path d="M3.500 2.500h15M3.500 5h15M3.500 7.500h15" stroke="#b9c9dc" stroke-width=".7"></path><path d="M5 13.500h12v8.500h-12z" fill="#c4c4c4"></path><rect x="6.800" y="15.500" width="3.200" height="5" fill="#3a3a3a"></rect></g></svg>
<svg style="left:1109px;top:733px;" width="28" height="28" viewBox="0 0 28 28"><g fill="none" stroke="#222" stroke-width="1.300" stroke-linejoin="round"><path d="M1.500 1.500h20l-7.500 9v11.500l-4.500-3v-8.500z"></path><path d="M17.500 17l8 8M25.500 17l-8 8"></path></g></svg>
<svg style="left:1199px;top:734px;" width="22" height="24" viewBox="0 0 22 24"><g><path d="M1 .5h13l6.500 6.500v16h-19.500z" fill="#f4f4f4" stroke="#d0d0d0" stroke-width="1"></path><path d="M14 .5v6.500h6.500z" fill="#dcdcdc" stroke="#d0d0d0" stroke-width=".6"></path><path d="M4.500 12.500c4.500-1.500 6.500-7.500 5.500-9s-2.500 2.500 .5 6s6 4 6.500 2.800s-6-2-12.500 .2z" fill="none" stroke="#e4585e" stroke-width=".9"></path><rect x="1" y="14.500" width="19.500" height="8" fill="#e5393f"></rect></g></svg>
<div class="tc" style="left:910px;top:748px;width:600px;height:9px;"><span class="ti" style="font: 700 7.5px / 9px &quot;Liberation Sans&quot;, sans-serif; color: rgb(255, 255, 255); white-space: nowrap; transform: scaleX(0.9333); transform-origin: 50% 50%;">PDF</span></div>
</div>
</body></html>
